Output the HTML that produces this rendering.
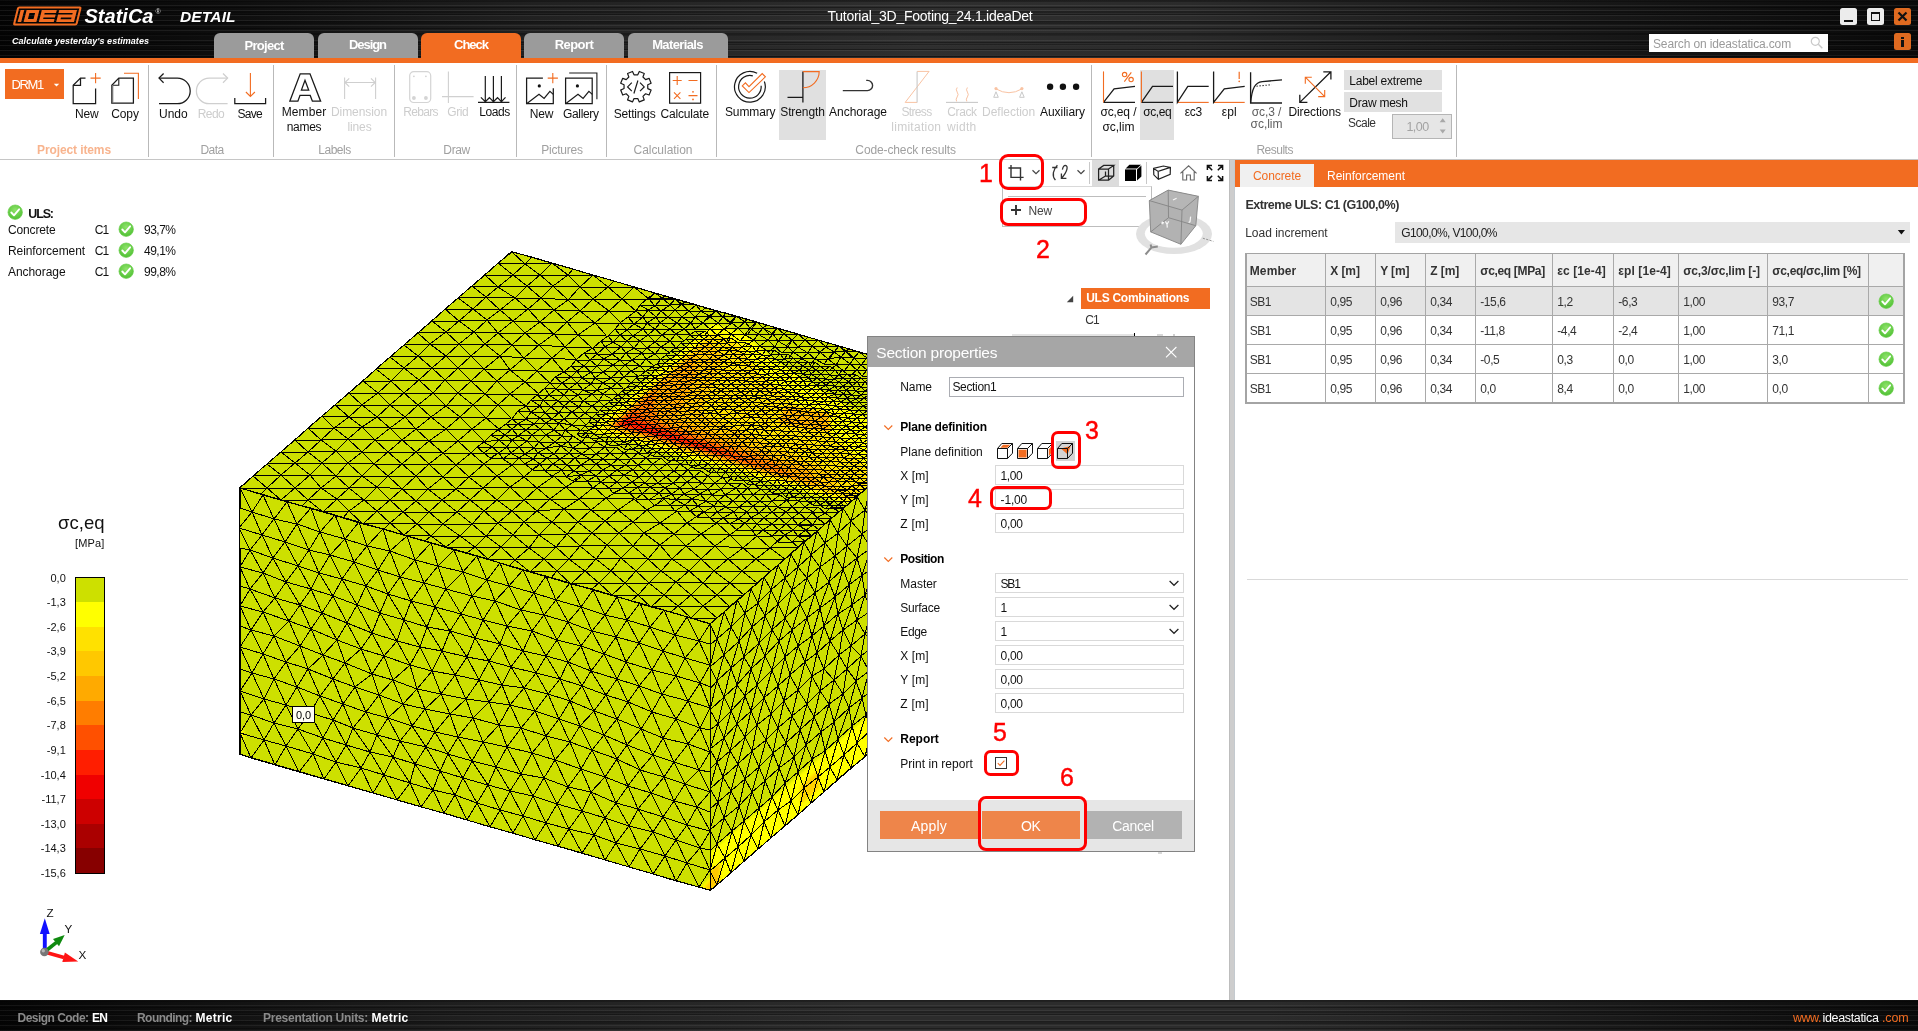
<!DOCTYPE html><html><head><meta charset="utf-8"><title>IDEA StatiCa Detail</title><style>html,body{margin:0;padding:0;background:#fff;}
body{width:1918px;height:1031px;position:relative;overflow:hidden;font-family:"Liberation Sans",sans-serif;}
.t{position:absolute;white-space:nowrap;line-height:1;will-change:opacity;}
.r{position:absolute;}
svg{overflow:visible;}</style></head><body><div class="r" style="left:0px;top:160px;width:1229px;height:840px;background:#fff;"></div><svg class="r" style="left:220px;top:240px" width="780" height="660" viewBox="220 240 780 660"><defs><filter id="bl" x="-10%" y="-10%" width="120%" height="120%"><feGaussianBlur stdDeviation="1.6"/></filter><clipPath id="ctop"><polygon points="239.5,487.8 511.5,251.5 982.5,387.4 710.5,623.7"/></clipPath><clipPath id="crt"><polygon points="710.5,623.7 982.5,387.4 982.5,654.2 710.5,890.5"/></clipPath><clipPath id="cfl"><polygon points="239.5,487.8 710.5,623.7 710.5,890.5 239.5,754.2"/></clipPath></defs><polygon points="239.5,487.8 511.5,251.5 982.5,387.4 982.5,654.2 710.5,890.5 239.5,754.2" fill="#cde000"/><g clip-path="url(#ctop)"><g filter="url(#bl)"><polygon points="589.8,429.9 712.2,323.6 744.2,332.8 771.6,358.0 864.5,416.3 915.0,462.4 862.0,508.4" fill="#ffff00"/><polygon points="601.4,428.5 711.5,332.8 738.0,343.6 760.0,373.6 817.6,421.7 879.1,477.2 851.9,500.8" fill="#ffe100"/><polygon points="606.4,427.5 707.6,339.5 723.0,356.6 701.6,413.4 838.0,474.8 835.3,493.5" fill="#ffc800"/><polygon points="609.9,426.6 693.1,354.3 696.6,374.2 676.6,418.8 811.2,470.8 818.1,486.6" fill="#ffaa00"/><polygon points="612.7,425.8 656.5,387.8 653.8,405.9 660.4,421.9 771.9,461.4 800.6,480.0" fill="#ff7d00"/><polygon points="615.2,425.3 633.4,409.4 648.2,421.6 724.2,448.2 764.0,468.2" fill="#ff5000"/><polygon points="617.4,425.0 626.6,416.9 653.9,427.6 703.5,444.5 736.6,459.3" fill="#ff1e00"/><polygon points="778.4,423.0 785.3,406.1 828.5,412.2 831.0,431.8" fill="#ffb400"/></g></g><g clip-path="url(#crt)"><g filter="url(#bl)"><polygon points="696.9,863.6 996.1,603.7 996.1,669.1 696.9,929.0" fill="#ffff00"/><polygon points="696.9,882.3 720.0,862.2 720.0,882.2 696.9,902.3" fill="#ffc800"/><polygon points="800.3,785.8 819.3,769.3 819.3,788.0 800.3,804.5" fill="#ffd200"/></g></g><g clip-path="url(#cfl)"><g filter="url(#bl)"><polygon points="695.4,891.5 715.2,871.9 715.2,897.2" fill="#ffff00"/><polygon points="703.4,888.5 715.2,874.5 715.2,891.9" fill="#ffc800"/><polygon points="215.9,722.1 244.2,730.3 244.2,739.6 215.9,731.4" fill="#ffff00"/></g></g><g fill="none" stroke="#000" stroke-width="1" shape-rendering="crispEdges"><path d="M240 488l13-12l14-12l14-12l14-12l13-12l14-12l13-11l14-12l14-12l13-12l14-12l14-12l14-12l14-12l13-12l13-11l14-12l13-11l13-12l14-11M261 494l6-6l14-13l14-12l13-11l13-12l13-12l15-11l13-12l16-12l13-12l13-13l14-12l12-12l16-12l13-11l14-12l13-12l12-10l15-12l12-11l7-7M281 500l14-12l15-13l12-12l14-12l12-12l14-12l15-10l13-12l14-12l15-13l13-12l14-12l13-12l15-12l13-12l13-10l15-12l12-12l13-11l12-12M302 506l6-6l13-12l15-12l12-13l14-11l13-12l15-12l15-11l13-12l15-12l12-13l13-12l13-12l14-12l13-11l15-12l15-12l13-11l12-12l15-11l5-6M323 512l14-13l12-11l13-12l12-12l14-12l14-12l14-11l15-12l15-11l12-13l13-12l13-12l16-13l12-11l13-12l15-11l14-12l14-10l12-13l13-12M343 518l6-7l15-11l13-13l11-11l14-12l14-12l13-11l17-12l14-12l13-12l12-11l12-13l13-11l14-12l15-13l15-11l13-12l13-11l13-12l15-12l6-6M363 524l14-13l13-11l12-11l14-13l13-12l14-11l15-12l14-12l14-11l12-13l12-11l15-12l12-11l15-13l13-11l13-12l17-12l14-12l13-12l12-12M384 529l6-6l13-11l13-11l12-12l15-12l13-12l15-12M649 299l6-6M404 535l13-11l12-12l13-12l14-11l13-12l15-13l14-11M663 311l12-12M425 541l6-5l12-12l14-12l13-12l13-12l14-12l15-11M689 311l7-6M446 547l14-11l12-12l12-13l13-11l13-13l14-10l14-12M703 323l13-12M467 553l8-6l11-11l12-13l14-12l12-11l13-12l17-12M730 323l6-7M488 559l13-12l12-12l11-13l13-11l13-12l16-12l15-10M747 335l10-13M509 566l6-6l14-12l10-13l13-13l12-13l15-10l15-12M770 335l7-7M530 572l14-13l12-12l11-13l11-12l13-12l15-12l17-10M786 346l12-12M551 578l6-7l12-12l11-13l12-13l13-12l13-11l16-11M812 346l6-6M571 584l14-13l11-12l11-14l12-12l14-11l14-12l18-11M829 359l10-13M592 589l7-6l12-12l10-13l12-12l11-13l16-10l17-12M853 358l6-6M612 595l13-12l11-12l12-12l12-14l14-11l13-11l16-11M869 370l11-12M631 601l7-6l11-12l12-12l11-12l14-13l15-12l16-11M895 370l5-6M651 607l13-12l12-13l13-11l12-12l14-13l15-11l14-11M909 382l12-12M671 612l7-6l13-11l12-12l11-12l14-12l15-11l14-12M935 382l6-6M691 618l12-12l14-11l13-12l12-12l14-12l14-11l14-13M950 394l12-13M710 624l7-6l13-11l14-12l13-12l14-12l14-12l13-12l14-11l13-12l14-12l13-11l13-12l13-11l14-12l14-12l13-12l14-12l15-12l14-12l14-13l6-6M240 488l21 6l20 6l21 6l21 6l20 6l20 6l21 5l20 6l21 6l21 6l21 6l21 6l21 7l21 6l21 6l20 6l21 5l20 6l19 6l20 6l20 5l20 6l19 6M240 488l21 6l20 6l21 6l21 6l20 6l20 6l21 5l20 6l21 6l21 6l21 6l21 6l21 7l21 6l21 6l20 6l21 5l20 6l19 6l20 6l20 5l20 6l19 6M240 488l21 6l20 6l21 6l21 6l20 6l20 6l21 5l20 6l21 6l21 6l21 6l21 6l21 7l21 6l21 6l20 6l21 5l20 6l19 6l20 6l20 5l20 6l19 6M240 488l21 6l20 6l21 6l21 6l20 6l20 6l21 5l20 6l21 6l21 6l21 6l21 6l21 7l21 6l21 6l20 6l21 5l20 6l19 6l20 6l20 5l20 6l19 6M240 488l21 6l20 6l21 6l21 6l20 6l20 6l21 5l20 6l21 6l21 6l21 6l21 6l21 7l21 6l21 6l20 6l21 5l20 6l19 6l20 6l20 5l20 6l19 6M240 488l21 6l20 6l21 6l21 6l20 6l20 6l21 5l20 6l21 6l21 6l21 6l21 6l21 7l21 6l21 6l20 6l21 5l20 6l19 6l20 6l20 5l20 6l19 6M240 488l21 6l20 6l21 6l21 6l20 6l20 6l21 5l20 6l21 6l21 6l21 6l21 6l21 7l21 6l21 6l20 6l21 5l20 6l19 6l20 6l20 5l20 6l19 6M240 488l21 6l20 6l21 6l21 6l20 6l20 6l21 5l20 6l21 6l21 6l21 6l21 6l21 7l21 6l21 6l20 6l21 5l20 6l19 6l20 6l20 5l20 6l19 6M240 488l21 6l20 6l21 6l21 6l20 6l20 6l21 5l20 6l21 6l21 6l21 6l21 6l21 7l21 6l21 6l20 6l21 5l20 6l19 6l20 6l20 5l20 6l19 6M240 488l21 6l20 6l21 6l21 6l20 6l20 6l21 5l20 6l21 6l21 6l21 6l21 6l21 7l21 6l21 6l20 6l21 5l20 6l19 6l20 6l20 5l20 6l19 6M240 488l21 6l20 6l21 6l21 6l20 6l20 6l21 5l20 6l21 6l21 6l21 6l21 6l21 7l21 6l21 6l20 6l21 5l20 6l19 6l20 6l20 5l20 6l19 6M240 488l21 6l20 6l21 6l21 6l20 6l20 6l21 5l20 6l21 6l21 6l21 6l21 6l21 7l21 6l21 6l20 6l21 5l20 6l19 6l20 6l20 5l20 6l19 6M240 488l21 6l20 6l21 6l21 6l20 6l20 6l21 5l20 6l21 6l21 6l21 6l21 6l21 7l21 6l21 6l20 6l21 5l20 6l19 6l20 6l20 5l20 6l26 0M240 488l21 6l20 6l21 6l21 6l20 6l20 6l21 5l20 6l21 6l21 6l21 6l21 6l21 7l21 6l21 6l20 6l21 5l20 6l19 6l20 6l27-1l25 0l27 1M240 488l21 6l20 6l21 6l21 6l20 6l20 6l21 5l20 6l21 6l21 6l21 6l21 6l21 7l21 6l21 6l20 6l21 5l20 6l26 0l26 0l27 0l26 0l27 0M240 488l21 6l20 6l21 6l21 6l20 6l20 6l21 5l20 6l21 6l21 6l21 6l21 6l21 7l21 6l21 6l20 6l28-1l26 0l24 0l27-1l27 1l27 0l27 0M240 488l21 6l20 6l21 6l21 6l20 6l20 6l21 5l20 6l21 6l21 6l21 6l21 6l21 7l21 6l27-1l28 0l26 0l25 0l25 0l28 0l25 0l28 0l29 0M240 488l21 6l20 6l21 6l21 6l20 6l20 6l21 5l20 6l21 6l21 6l21 6l21 6l27 1l29-1l25 0l27 0l25-1l27 1l24 0l29 0l27 0l28 0l29 0M240 488l21 6l20 6l21 6l21 6l20 6l20 6l21 5l20 6l21 6l21 6l29 0l26 0l28 1l27-1l24-1l27-1l26 1l27-1l26 1l29 0l28 2l27 0l28-1M240 488l21 6l20 6l21 6l21 6l20 6l20 6l21 5l20 6l27 1l29 0l26 0l27-1l26 0l28-1l25-1l27 0l25 0l30 1l27 0l29 1l27 1M784 535l28 1M240 488l21 6l20 6l21 6l21 6l20 6l20 6l27-1l27 1l26 0l29 0l26-1l26-1l28 0l26 0l27-1l28 1l27 1l27 0l30 0M798 524l27 0M240 488l21 6l20 6l21 6l21 6l26-1l28 0l26 1l26 0l28 0l27-1l28 0l25 0l27-2l27 1l27 0l29 0l30 1M812 513l27-1M240 488l21 6l20 6l27 0l29-1l27 1l26 0l26 1l26-1l28 0l27 0l27 0l26-1l29 0l27-1l28 1M826 501l26 0M240 488l27 0l28 0l26 0l28 0l28-1l25 2l26 0l28 0l27-1l27-1l27 1l29-1l28 0M837 489l28 0M253 476l28-1l29 0l26 1l26 0l26 0l28 0l27 1l26 0l28-1l27 1l30-1M850 478l28 0M267 464l28-1l27 0l26 0l26 1l28 0l27 0l27 1l28-1l28 1M864 466l28 0M281 452l27 0l28-1l26 1l26 0l28 0l27 1l28 0M876 454l30 0M295 440l26 0l27-1l27 1l27 0l27 1l29 0l26 0M892 442l27 0M308 428l26 0l28-1l28 1l26 1l30 0l26 0l27 0M906 430l27 0M322 416l27 1l28 0l28 0l26 0l29 0l26 1l25 0M920 418l28 0M335 405l27 0l28 0l28 0l28 1l27-1l25 0l28 1M934 407l28-1M349 393l29 0l26 0l29 0l25 0l27 1l25 0l29 0M950 394l26-1M363 381l28 0l28-1l26 0l26 1l26 0l28 1l25 1M935 382l27-1l20 6M376 369l28-1l28 0l26 0l26 1l26 1l27 1l27 1M895 370l26 0l20 6l21 5l20 6M390 357l28-1l28 0l25 0l29 0l24 2l28 0l25 2M853 358l27 0l20 6l21 6l20 6l21 5l20 6M404 345l26-1l29 0l26 0l27 1l27 0l26 2l27 1M812 346l27 0l20 6l21 6l20 6l21 6l20 6l21 5l20 6M418 333l28-1l28 0l24 1l27 0l29 1l24 1l28 0M770 335l28-1l20 6l21 6l20 6l21 6l20 6l21 6l20 6l21 5l20 6M432 321l27 0l28-1l26 1l27 1l27 0l28 1l26 0M730 323l27-1l20 6l21 6l20 6l21 6l20 6l21 6l20 6l21 6l20 6l21 5l20 6M445 309l28 0l27 1l28-1l26 1l26 1l29 0l27 0M689 311l27 0l20 5l21 6l20 6l21 6l20 6l21 6l20 6l21 6l20 6l21 6l20 6l21 5l20 6M458 298l28-1l29 1l26 0l27 2l25-1l29 0l27 0l26 0l21 6l20 6l20 5l21 6l20 6l21 6l20 6l21 6l20 6l21 6l20 6l21 6l20 6l21 5l20 6M472 286l26 1l29-1l26 0l27 1l28 0l26 0l21 6l20 6l21 6l20 6l20 5l21 6l20 6l21 6l20 6l21 6l20 6l21 6l20 6l21 6l20 6l21 5l20 6M485 275l28 0l27 0l28 0l25 0l21 6l20 6l21 6l20 6l21 6l20 6l20 5l21 6l20 6l21 6l20 6l21 6l20 6l21 6l20 6l21 6l20 6l21 5l20 6M498 263l27 1l27-1l21 6l20 6l21 6l20 6l21 6l20 6l21 6l20 6l20 5l21 6l20 6l21 6l20 6l21 6l20 6l21 6l20 6l21 6l20 6l21 5l20 6M512 252l20 5l20 6l21 6l20 6l21 6l20 6l21 6l20 6l21 6l20 6l20 5l21 6l20 6l21 6l20 6l21 6l20 6l21 6l20 6l21 6l20 6l21 5l20 6M512 252l20 5l20 6l21 6l20 6l21 6l20 6l21 6l20 6l21 6l20 6l20 5l21 6l20 6l21 6l20 6l21 6l20 6l21 6l20 6l21 6l20 6l21 5l20 6M240 488l21 6l20 6l21 6l21 6l20 6l20 6l21 5l20 6l21 6l21 6l21 6l21 6l21 7l21 6l21 6l20 6l21 5l20 6l19 6l20 6l20 5l20 6l19 6M240 488l21 6l20 6l21 6l21 6l20 6l20 6l21 5l20 6l21 6l21 6l21 6l21 6l21 7l21 6l21 6l20 6l21 5l20 6l19 6l20 6l20 5l20 6l19 6M253 476l14 12l14 12l21 6l21 6l20 6l20 6l21 5l20 6l21 6l21 6l21 6l21 6l21 7l21 6l21 6l20 6l21 5l20 6l19 6l20 6l20 5l20 6l19 6M267 464l14 11l14 13l13 12l15 12l20 6l20 6l21 5l20 6l21 6l21 6l21 6l21 6l21 7l21 6l21 6l20 6l21 5l20 6l19 6l20 6l20 5l20 6l19 6M281 452l14 11l15 12l11 13l16 11l12 12l14 13l21 5l20 6l21 6l21 6l21 6l21 6l21 7l21 6l21 6l20 6l21 5l20 6l19 6l20 6l20 5l20 6l19 6M295 440l13 12l14 11l14 13l13 12l15 12l13 11l13 12l14 12l21 6l21 6l21 6l21 6l21 7l21 6l21 6l20 6l21 5l20 6l19 6l20 6l20 5l20 6l19 6M308 428l13 12l15 11l12 12l14 13l15 11l13 13l13 12l14 12l14 12l15 11l21 6l21 6l21 7l21 6l21 6l20 6l21 5l20 6l19 6l20 6l20 5l20 6l19 6M322 416l12 12l14 11l14 13l12 12l14 12l14 13l14 12l13 11l14 12l17 12l15 11l13 12l21 7l21 6l21 6l20 6l21 5l20 6l19 6l20 6l20 5l20 6l19 6M335 405l14 12l13 10l13 13l13 12l14 12l14 12l12 13l14 11l15 12l15 12l14 12l15 11l14 13l15 12l21 6l20 6l21 5l20 6l19 6l20 6l20 5l20 6l19 6M349 393l13 12l15 12l13 11l12 12l14 12l13 12l14 13l13 12l14 11l14 11l14 12l15 12l16 13l15 11l13 12l14 13l21 5l20 6l19 6l20 6l20 5l20 6l19 6M363 381l15 12l12 12l15 12l11 12l13 12l14 12l13 12l13 12l14 11l14 12l15 11l12 11l15 13l17 12l13 12l16 12l14 12l13 12l19 6l20 6l20 5l20 6l19 6M376 369l15 12l13 12l14 12l13 12l15 12l12 12l13 12l13 11l13 12l13 11l14 13l13 11l15 11l15 12l13 12l16 13l15 12l14 12l13 12l13 12l20 5l20 6l19 6M390 357l14 11l15 12l14 13l13 13l14 11l12 12l12 12M512 465l12 12l13 11l13 11l14 10l14 13l14 11l15 12l14 13l15 13l13 12l15 12l14 11l13 12l19 6M404 345l14 11l14 12l13 12l13 13l15 12l13 13l13 11M554 476l12 11l13 12l12 11l14 11l14 12l14 13l15 13l13 12l15 11l15 13l12 11l14 12M418 333l12 11l16 12l12 12l13 13l14 13l13 11l13 13M594 487l12 11l12 12l15 12l11 11l16 12l12 14l17 12l14 12l14 12l13 12M432 321l14 11l13 12l12 12l13 13l13 12l13 13l16 12M634 499l13 11l13 13l14 11l12 12l15 13l13 12l16 12l14 12M445 309l14 12l15 11l11 12l15 12l10 14l15 12l14 12M677 511l10 12l14 11l14 12l13 13l14 12l15 12M458 298l15 11l14 11l11 13l14 12l12 13l13 13l13 12M717 523l13 12l13 13l13 11l15 12M472 286l14 11l14 13l13 11l12 12l14 12l13 13l12 14M757 536l13 12l15 11M485 275l13 12l17 11l13 11l12 13l14 12l11 13l12 13M784 535l14 12M498 263l15 12l14 11l14 12l13 12l13 12l11 13l14 13M798 524l14 12M512 252l13 12l15 11l13 11l15 14l12 11l15 12l11 12M812 513l13 11M512 252l20 5l20 6l16 12l12 12l13 12l16 12l12 12M826 501l13 11M512 252l20 5l20 6l21 6l20 6l15 12l14 12l14 12M837 489l15 12M512 252l20 5l20 6l21 6l20 6l21 6l20 6l15 12M850 478l15 11M512 252l20 5l20 6l21 6l20 6l21 6l20 6l21 6l20 6l14 12M864 466l14 12M512 252l20 5l20 6l21 6l20 6l21 6l20 6l21 6l20 6l21 6l20 6l14 12M876 454l16 12M512 252l20 5l20 6l21 6l20 6l21 6l20 6l21 6l20 6l21 6l20 6l20 5l21 6l13 13M892 442l14 12M512 252l20 5l20 6l21 6l20 6l21 6l20 6l21 6l20 6l21 6l20 6l20 5l21 6l20 6l21 6l14 12M906 430l13 12M512 252l20 5l20 6l21 6l20 6l21 6l20 6l21 6l20 6l21 6l20 6l20 5l21 6l20 6l21 6l20 6l21 6l14 12M920 418l13 12M512 252l20 5l20 6l21 6l20 6l21 6l20 6l21 6l20 6l21 6l20 6l20 5l21 6l20 6l21 6l20 6l21 6l20 6l21 6l15 12M934 407l14 11M512 252l20 5l20 6l21 6l20 6l21 6l20 6l21 6l20 6l21 6l20 6l20 5l21 6l20 6l21 6l20 6l21 6l20 6l21 6l20 6l21 6l14 12M950 394l12 12M512 252l20 5l20 6l21 6l20 6l21 6l20 6l21 6l20 6l21 6l20 6l20 5l21 6l20 6l21 6l20 6l21 6l20 6l21 6l20 6l21 6l20 6l21 5l14 12M512 252l20 5l20 6l21 6l20 6l21 6l20 6l21 6l20 6l21 6l20 6l20 5l21 6l20 6l21 6l20 6l21 6l20 6l21 6l20 6l21 6l20 6l21 5l20 6M512 252l20 5l20 6l21 6l20 6l21 6l20 6l21 6l20 6l21 6l20 6l20 5l21 6l20 6l21 6l20 6l21 6l20 6l21 6l20 6l21 6l20 6l21 5l20 6M512 252l20 5l20 6l21 6l20 6l21 6l20 6l21 6l20 6l21 6l20 6l20 5l21 6l20 6l21 6l20 6l21 6l20 6l21 6l20 6l21 6l20 6l21 5l20 6M512 252l20 5l20 6l21 6l20 6l21 6l20 6l21 6l20 6l21 6l20 6l20 5l21 6l20 6l21 6l20 6l21 6l20 6l21 6l20 6l21 6l20 6l21 5l20 6M512 252l20 5l20 6l21 6l20 6l21 6l20 6l21 6l20 6l21 6l20 6l20 5l21 6l20 6l21 6l20 6l21 6l20 6l21 6l20 6l21 6l20 6l21 5l20 6M512 252l20 5l20 6l21 6l20 6l21 6l20 6l21 6l20 6l21 6l20 6l20 5l21 6l20 6l21 6l20 6l21 6l20 6l21 6l20 6l21 6l20 6l21 5l20 6M512 252l20 5l20 6l21 6l20 6l21 6l20 6l21 6l20 6l21 6l20 6l20 5l21 6l20 6l21 6l20 6l21 6l20 6l21 6l20 6l21 6l20 6l21 5l20 6M512 252l20 5l20 6l21 6l20 6l21 6l20 6l21 6l20 6l21 6l20 6l20 5l21 6l20 6l21 6l20 6l21 6l20 6l21 6l20 6l21 6l20 6l21 5l20 6M512 252l20 5l20 6l21 6l20 6l21 6l20 6l21 6l20 6l21 6l20 6l20 5l21 6l20 6l21 6l20 6l21 6l20 6l21 6l20 6l21 6l20 6l21 5l20 6M512 252l20 5l20 6l21 6l20 6l21 6l20 6l21 6l20 6l21 6l20 6l20 5l21 6l20 6l21 6l20 6l21 6l20 6l21 6l20 6l21 6l20 6l21 5l20 6M512 252l20 5l20 6l21 6l20 6l21 6l20 6l21 6l20 6l21 6l20 6l20 5l21 6l20 6l21 6l20 6l21 6l20 6l21 6l20 6l21 6l20 6l21 5l20 6M512 252l20 5l20 6l21 6l20 6l21 6l20 6l21 6l20 6l21 6l20 6l20 5l21 6l20 6l21 6l20 6l21 6l20 6l21 6l20 6l21 6l20 6l21 5l20 6M512 252l20 5l20 6l21 6l20 6l21 6l20 6l21 6l20 6l21 6l20 6l20 5l21 6l20 6l21 6l20 6l21 6l20 6l21 6l20 6l21 6l20 6l21 5l20 6M471 453l6-6l7-5l7-7l7-5l8-6l6-5l6-8l8-5l5-6l6-5l8-7l5-5l5-6l9-5l7-6l5-6l8-7l9-5l8-7l7-5l7-7l5-6l8-6l8-6l4-6l8-7l7-5M484 453l8-6l7-7l6-5l7-6l6-5l8-5l5-7l9-6l3-6l6-5l7-6l6-6l9-6l6-6l7-5l6-6l7-6l8-7l8-5l7-7l7-5l7-6l9-7l5-7l7-4l7-8l3-2M490 458l9-5l8-6l5-7l6-4l8-6l8-6l6-6l5-5l6-6l7-6l6-6l5-6l8-6l5-5l9-6l6-6l7-7l8-5l9-7l6-6l6-5l10-7l4-6l9-6l5-6l9-6l5-6M503 459l8-6l8-6l8-6l5-6l8-6l6-6l6-4l7-6l5-7l6-5l8-6l5-5l8-6l4-6l8-6l10-7l7-5l6-7l8-5l6-7l8-6l7-6l5-6l8-6l7-7l7-6l3-2M512 465l7-7l6-4l9-6l5-6l7-7l8-5l5-7l5-4l8-7l7-5l4-6l9-7l5-4l6-7l8-5l8-7l6-6l7-5l10-7l5-5l8-6l7-7l8-6l7-6l5-6l7-6l7-6M525 464l8-5l5-6l8-5l9-6l7-6l3-6l7-5l7-7l6-5l7-7l7-5l4-7l8-6l6-5l7-6l7-6l9-5l6-7l9-5l6-7l9-6l6-7l8-5l7-6l4-6l6-6l5-3M533 470l7-6l7-6l7-4l7-8l7-4l5-6M695 329l8-6l6-7l7-5M545 471l8-7l7-5l9-6l4-5l9-6l5-7M704 336l6-7l8-6l5-6l3-4M552 476l10-6l5-5l8-7l7-4l8-6l6-6M717 335l7-6l8-6l4-7M566 477l8-6l7-6l9-6l6-5l9-7l3-6M727 341l4-7l7-6l7-6l2-3M573 481l8-6l8-4l7-7l7-5l7-6l6-6M740 341l5-6l5-7l7-6M587 481l9-5l7-6l8-5l7-6l6-6l7-5M746 346l8-6l4-6l5-6l4-3M593 488l8-6l8-6l8-6l9-5l5-6l7-6M760 346l8-6l5-6l4-6M609 488l8-6l7-7l9-5l5-5l8-7l7-6M768 352l7-5l3-6l6-7l3-3M613 493l10-5l9-6l7-5l7-6l7-7l8-6M782 353l6-6l4-7l6-6M629 493l9-6l7-4l7-7l7-6l8-6l8-6M789 358l4-6l5-5l7-7l3-3M636 499l6-5l8-7l8-4l8-6l8-6l6-7M802 358l6-5l4-7l6-6M649 500l10-7l6-5l8-5l8-7l7-6l7-6M810 365l5-6l5-7l6-5l2-4M655 506l8-8l9-4l8-6l7-6l7-5l7-6M824 364l4-5l6-7l5-6M670 505l6-5l8-6l10-5l8-6l6-7l6-6M830 370l6-5l5-8l5-6l3-2M675 511l10-6l7-6l8-5l8-5l7-6l8-6M844 371l6-7l4-6l5-6M690 511l8-5l8-5l6-6l9-6l6-6l5-6M850 376l7-6l4-5l6-7l2-3M697 517l7-5l10-6l4-5l7-6l11-7l6-5M862 376l5-6l7-7l6-5M710 518l7-6l9-5l7-6l8-7l7-6l5-5M870 383l6-6l5-7l6-7l3-2M716 523l7-5l11-6l5-5l8-6l6-6l8-6M883 383l4-7l8-6l5-6M730 524l8-5l9-7l6-6l7-5l6-7l7-6M888 389l8-7l6-6l5-6l3-3M737 530l8-7l6-5l8-5l8-7l5-5l8-6M901 389l7-8l6-5l7-6M752 530l5-6l7-6l8-6l6-5l9-7l6-4M908 395l9-7l5-7l6-5l3-3M756 536l7-6l9-6l7-6l7-6l6-5l7-6M922 393l7-5l5-6l7-6M772 536l7-6l7-6l6-6l7-5l6-6l8-6M928 400l7-6l7-7l8-5l2-3M778 542l7-7l8-5l5-5l8-6l7-7l5-5M942 400l7-6l7-7l6-6M792 542l6-6l8-6l7-5l4-7l8-5l6-6M948 406l6-6l8-6l8-7l2-3M798 547l7-6l7-5l7-6l6-6l7-6l7-6l6-5l7-6l7-6l6-6l7-5l6-6l7-6l7-6l7-6l7-6l6-6l7-6l7-6l7-6l8-6l7-6l7-6l7-6l7-7l7-6l6-6M778 542l14 0l13-1M756 536l16 0l13-1l13 1l14 0M737 530l15 0l11 0l16 0l14 0l13 0l13 0M716 523l14 1l15-1l12 1l15 0l14 0l12 1l15 0l12-1M697 517l13 1l13 0l15 1l13-1l13 0l15 0l13 0l14 1l11-1l15 0M675 511l15 0l14 1l13 0l17 0l13 0l12 1l13-1l14 0l13 1l14-1l12 1l14-1M655 506l15-1l15 0l13 1l16 0l12 1l13 0l14-1l14 0l11 1l14 0l13 0l13 0M831 507l14 0M636 499l13 1l14-2l13 2l16-1l14 2l12 0l15 0l14 0l13 0l12 0l15-1l12 1M839 501l13 0M613 493l16 0l13 1l17-1l13 1l12 0l16 0l12 1l13 0l16-1l12 1l13-1l14 1M844 495l15 0M593 488l16 0l14 0l15-1l12 0l15 1l15 0l14 1l14 0l13 0l15-1l12 0l13 1M852 490l13-1M573 481l14 0l14 1l16 0l15 0l13 1l13 0l15 0l14-1l15 1l13 0l12 0l15 0M859 483l13 1M552 476l14 1l15-2l15 1l13 0l15-1l15 2l13-1l14 1l15-1l13 1l14-1l15 1M865 478l13 0M533 470l12 1l17-1l12 1l15 0l14-1l14 0l16 0l13 1l13-1l15 1l14-1l13 1M872 473l13-1M512 465l13-1l15 0l13 0l14 1l14 0l15-1l15 1l15 0l12 0l15-1l14 0l13 0M878 467l14-1M490 458l13 1l16-1l14 1l14-1l13 1l15-1l15 1l13 0l15 0l13 0l15-1l15 0M886 460l13 0M471 453l13 0l15 0l12 0l14 1l13-1l16 1l15-1l13 1l14 0l14-1l14 0l14 0M891 454l15 0M477 447l15 0l15 0l12 0l15 1l12 0l15-2l12 2l17 0l15-1l11 0M898 448l14 0M484 442l15-2l13 0l15 1l12 1l16 0l13 0l14 0l14 0M906 442l13 0M491 435l14 0l13 1l14-1l14 0l16 1l11 0M913 436l13 0M498 430l14-1l14 1l14-1l14 1l11 0l15 0M919 430l14 0M506 424l12 0l16 0l12-1l13 0l13 2l14 0M926 424l15 0M512 419l14 0l14-1l12 1l12 0l15-1l13 0M934 418l14 0M518 411l13 1l14 1l14 0l13-1l13 1l14-1M943 412l12 0M526 406l14 0l11 1l13-1l15 1l13-1l13 1M948 406l14 0M531 400l12 0l15 1l12 0l13 0l16 0l14-1M942 400l12 0l15-1M537 395l12 0l15 0l14 0l14-1l11 0l15 1M922 393l13 1l14 0l13 0l14-1M545 388l11 1l13 0l14 1l14 0l14-2l12 0M901 389l16-1l12 0l13-1l14 0l14 0l12 0M550 383l12 0l15 0l14 1l12-1l14 0l15 1M883 383l13-1l12-1l14 0l12 1l16 0l12-1l10 3l10 3M555 377l16 0l11 1l13 0l16 0l13-1l14-1M862 376l14 1l11-1l15 0l12 0l14 0l13 0l11 3l10 2l10 3l10 3M564 372l13-1l14 1l12 0l16-1l12 0l14 0M844 371l13-1l10 0l14 0l14 0l12 0l14 0l10 3l10 3l11 3l10 2l10 3l10 3M571 366l13 0l13 0l16-1l12 0l15 1l14 0M824 364l12 1l14-1l11 1l13-2l13 0l13 1l10 3l11 3l10 3l10 3l11 3l10 2l10 3l10 3M576 360l14 0l14-1l16 1l12 0l14-1l14 0M802 358l13 1l13 0l13-2l13 1l13 0l13 0l10 3l10 3l10 3l11 3l10 3l10 3l11 3l10 2l10 3l10 3M584 353l13 1l15 0l14-1l16 0l13 1l15-1M782 353l11-1l15 1l12-1l14 0l12-1l13 1l10 3l11 3l10 3l10 3l10 3l11 3l10 3l10 3l11 3l10 2l10 3l10 3M593 348l12-1l16 0l13 1l13 0l14-1l15 1M760 346l15 1l13 0l10 0l14-1l14 1l13-1l10 3l10 3l10 3l11 3l10 3l10 3l10 3l11 3l10 3l10 3l11 3l10 2l10 3l10 3M601 341l12 1l14-1l13 0l15 1l15-1l14 0M740 341l14-1l14 0l10 1l14-1l13 0l13 0l10 3l11 3l10 3l10 3l10 3l11 3l10 3l10 3l10 3l11 3l10 3l10 3l11 3l10 2l10 3l10 3M608 336l12-1l13 1l15-1l14 0l14-1l15 1M717 335l14-1l14 1l13-1l15 0l11 0l14 0l10 3l10 3l10 3l11 3l10 3l10 3l10 3l11 3l10 3l10 3l10 3l11 3l10 3l10 3l11 3l10 2l10 3l10 3M615 329l12 1l16-1l12 0l15 0l14 0l11 0l15 0l14 0l14-1l12 0l13 0l14 0l10 3l11 3l10 3l10 3l10 3l11 3l10 3l10 3l10 3l11 3l10 3l10 3l10 3l11 3l10 3l10 3l11 3l10 2l10 3l10 3M620 323l14 1l13-1l13 0l17 0l14 0l12 0l15 0l14 0l13-1l12 0l10 3l10 3l10 3l11 3l10 3l10 3l10 3l11 3l10 3l10 3l10 3l11 3l10 3l10 3l10 3l11 3l10 3l10 3l11 3l10 2l10 3l10 3M628 317l15 0l13 0l12 0l14 0l13 0l14-1l14 1l13-1l11 3l10 3l10 3l10 3l10 3l11 3l10 3l10 3l10 3l11 3l10 3l10 3l10 3l11 3l10 3l10 3l10 3l11 3l10 3l10 3l11 3l10 2l10 3l10 3M636 311l12-1l13 1l14-1l14 1l12 0l15 0l10 2l10 3l11 3l10 3l10 3l10 3l10 3l11 3l10 3l10 3l10 3l11 3l10 3l10 3l10 3l11 3l10 3l10 3l10 3l11 3l10 3l10 3l11 3l10 2l10 3l10 3M640 305l15 1l15-1l12-1l14 1l10 3l10 3l10 2l10 3l11 3l10 3l10 3l10 3l10 3l11 3l10 3l10 3l10 3l11 3l10 3l10 3l10 3l11 3l10 3l10 3l10 3l11 3l10 3l10 3l11 3l10 2l10 3l10 3M648 298l14 0l13 1l10 3l11 3l10 3l10 3l10 2l10 3l11 3l10 3l10 3l10 3l10 3l11 3l10 3l10 3l10 3l11 3l10 3l10 3l10 3l11 3l10 3l10 3l10 3l11 3l10 3l10 3l11 3l10 2l10 3l10 3M655 293l10 3l10 3l10 3l11 3l10 3l10 3l10 2l10 3l11 3l10 3l10 3l10 3l10 3l11 3l10 3l10 3l10 3l11 3l10 3l10 3l10 3l11 3l10 3l10 3l10 3l11 3l10 3l10 3l11 3l10 2l10 3l10 3M655 293l10 3l10 3l10 3l11 3l10 3l10 3l10 2l10 3l11 3l10 3l10 3l10 3l10 3l11 3l10 3l10 3l10 3l11 3l10 3l10 3l10 3l11 3l10 3l10 3l10 3l11 3l10 3l10 3l11 3l10 2l10 3l10 3M655 293l10 3l10 3l10 3l11 3l10 3l10 3l10 2l10 3l11 3l10 3l10 3l10 3l10 3l11 3l10 3l10 3l10 3l11 3l10 3l10 3l10 3l11 3l10 3l10 3l10 3l11 3l10 3l10 3l11 3l10 2l10 3l10 3M655 293l10 3l10 3l10 3l11 3l10 3l10 3l10 2l10 3l11 3l10 3l10 3l10 3l10 3l11 3l10 3l10 3l10 3l11 3l10 3l10 3l10 3l11 3l10 3l10 3l10 3l11 3l10 3l10 3l11 3l10 2l10 3l10 3M655 293l10 3l10 3l10 3l11 3l10 3l10 3l10 2l10 3l11 3l10 3l10 3l10 3l10 3l11 3l10 3l10 3l10 3l11 3l10 3l10 3l10 3l11 3l10 3l10 3l10 3l11 3l10 3l10 3l11 3l10 2l10 3l10 3M655 293l10 3l10 3l10 3l11 3l10 3l10 3l10 2l10 3l11 3l10 3l10 3l10 3l10 3l11 3l10 3l10 3l10 3l11 3l10 3l10 3l10 3l11 3l10 3l10 3l10 3l11 3l10 3l10 3l11 3l10 2l10 3l10 3M655 293l10 3l10 3l10 3l11 3l10 3l10 3l10 2l10 3l11 3l10 3l10 3l10 3l10 3l11 3l10 3l10 3l10 3l11 3l10 3l10 3l10 3l11 3l10 3l10 3l10 3l11 3l10 3l10 3l11 3l10 2l10 3l10 3M655 293l10 3l10 3l10 3l11 3l10 3l10 3l10 2l10 3l11 3l10 3l10 3l10 3l10 3l11 3l10 3l10 3l10 3l11 3l10 3l10 3l10 3l11 3l10 3l10 3l10 3l11 3l10 3l10 3l11 3l10 2l10 3l10 3M655 293l10 3l10 3l10 3l11 3l10 3l10 3l10 2l10 3l11 3l10 3l10 3l10 3l10 3l11 3l10 3l10 3l10 3l11 3l10 3l10 3l10 3l11 3l10 3l10 3l10 3l11 3l10 3l10 3l11 3l10 2l10 3l10 3M477 447l7 6l6 5M484 442l8 5l7 6l4 6l9 6M491 435l8 5l8 7l4 6l8 5l6 6l8 6M498 430l7 5l7 5l7 7l6 7l8 5l7 5l5 7l7 5M506 424l6 5l6 7l9 5l7 7l4 5l9 5l6 6l9 6l4 7l7 4M512 419l6 5l8 6l6 5l7 7l7 6l8 6l6 5l7 6l7 6l7 4l6 6l6 7M518 411l8 8l8 5l6 5l6 6l9 7l6 4l8 7l6 5l6 7l8 6l7 5l5 6l8 6l4 5M526 406l5 6l9 6l6 5l8 7l8 6l6 6l5 6l9 6l8 5l6 5l7 6l6 6l8 6l6 6l6 5l7 6M531 400l9 6l5 7l7 6l7 4l6 7l8 6l9 6l8 6l6 6l7 5l8 6l6 5l7 5l8 7l6 5l4 7l7 6l6 6M537 395l6 5l8 7l8 6l5 6l8 6l8 5M596 442l9 5l5 6l8 6l8 6l7 5l6 7l6 6l5 4l9 6l4 5l7 7l5 6M545 388l4 7l9 6l6 5l8 6l7 6l7 7M616 447l8 6l7 6l7 6l8 6l6 5l6 7l7 5l7 6l4 6l9 5l5 6l7 6M550 383l6 6l8 6l6 6l9 6l6 6l7 5M638 453l8 5l7 6l6 6l7 7l7 6l7 5l4 6l8 5l6 7l6 6l6 6l6 5M555 377l7 6l7 6l9 6l5 6l9 5l7 6M661 458l6 6l7 7l7 5l6 6l7 7l6 5l6 7l8 5l3 6l6 6l7 6l7 6M564 372l7 5l6 6l6 7l9 4l7 7l6 6M680 464l8 6l6 7l8 6l6 6l4 6l6 6l8 6l8 5l4 7l7 4l7 7l4 6M571 366l6 5l5 7l9 6l6 6l6 4l10 6M701 471l7 5l7 7l6 6l4 6l8 6l6 6l8 5l4 6l6 6l6 6l9 6l6 6M576 360l8 6l7 6l4 6l8 5l8 5l7 7M723 477l4 6l9 5l5 6l6 7l6 5l6 7l5 5l8 6l7 6l6 5l7 7l6 5M584 353l6 7l7 6l6 6l8 6l6 5l6 5M742 483l6 5l5 7l7 6l7 5l5 6l7 6l7 6l7 6l5 6l7 5M593 348l4 6l7 5l9 6l6 6l5 6l8 7M761 489l5 5l6 7l6 6l8 5l6 6l6 7l8 5l6 6M601 341l4 6l7 7l8 6l5 5l6 6l7 5M780 495l7 5l5 7l7 6l7 6l7 6l6 5M608 336l5 6l8 5l5 6l6 7l8 6l5 5M799 501l6 6l8 5l4 6l8 6M615 329l5 6l7 6l7 7l8 5l4 6l8 7M818 507l7 6l7 5M620 323l7 7l6 6l7 5l7 7l8 6l5 5M831 507l8 5M628 317l6 7l9 5l5 6l7 7l6 5l9 6M839 501l6 6M636 311l7 6l4 6l8 6l7 6l8 6l6 7M844 495l8 6M640 305l8 5l8 7l4 6l10 6l6 5l8 7M852 490l7 5M648 298l7 8l6 5l7 6l9 6l7 6l7 6M859 483l6 6M655 293l7 5l8 7l5 5l7 7l9 6l4 6M865 478l7 6M655 293l10 3l10 3l7 5l7 7l6 6l8 6l7 6l7 6M872 473l6 5M655 293l10 3l10 3l10 3l11 3l5 6l8 5l9 7l6 6l7 5l9 7M878 467l7 5M655 293l10 3l10 3l10 3l11 3l10 3l10 3l7 6l9 6l6 5l7 7l9 5l6 6M886 460l6 6M655 293l10 3l10 3l10 3l11 3l10 3l10 3l10 2l10 3l9 6l5 6l8 6l10 6l7 7l7 6M891 454l8 6M655 293l10 3l10 3l10 3l11 3l10 3l10 3l10 2l10 3l11 3l10 3l6 6l10 6l5 7l10 6l5 5l9 6M898 448l8 6M655 293l10 3l10 3l10 3l11 3l10 3l10 3l10 2l10 3l11 3l10 3l10 3l10 3l7 6l8 6l6 7l10 6l7 6l9 5M906 442l6 6M655 293l10 3l10 3l10 3l11 3l10 3l10 3l10 2l10 3l11 3l10 3l10 3l10 3l10 3l11 3l7 6l7 6l8 6l8 7l8 6l8 6M913 436l6 6M655 293l10 3l10 3l10 3l11 3l10 3l10 3l10 2l10 3l11 3l10 3l10 3l10 3l10 3l11 3l10 3l10 3l8 7l8 5l7 5l9 7l7 6l5 6M919 430l7 6M655 293l10 3l10 3l10 3l11 3l10 3l10 3l10 2l10 3l11 3l10 3l10 3l10 3l10 3l11 3l10 3l10 3l10 3l11 3l7 5l8 7l7 7l6 5l9 7l7 6M926 424l7 6M655 293l10 3l10 3l10 3l11 3l10 3l10 3l10 2l10 3l11 3l10 3l10 3l10 3l10 3l11 3l10 3l10 3l10 3l11 3l10 3l10 3l8 6l7 5l7 7l6 6l9 6l5 7M934 418l7 6M655 293l10 3l10 3l10 3l11 3l10 3l10 3l10 2l10 3l11 3l10 3l10 3l10 3l10 3l11 3l10 3l10 3l10 3l11 3l10 3l10 3l10 3l11 3l7 5l8 7l7 6l6 5l9 7l5 5M943 412l5 6M655 293l10 3l10 3l10 3l11 3l10 3l10 3l10 2l10 3l11 3l10 3l10 3l10 3l10 3l11 3l10 3l10 3l10 3l11 3l10 3l10 3l10 3l11 3l10 3l10 3l7 6l7 6l8 5l7 7l6 6l7 6M948 406l7 6M655 293l10 3l10 3l10 3l11 3l10 3l10 3l10 2l10 3l11 3l10 3l10 3l10 3l10 3l11 3l10 3l10 3l10 3l11 3l10 3l10 3l10 3l11 3l10 3l10 3l10 3l11 3l7 6l6 6l8 5l7 7l5 6l8 6M655 293l10 3l10 3l10 3l11 3l10 3l10 3l10 2l10 3l11 3l10 3l10 3l10 3l10 3l11 3l10 3l10 3l10 3l11 3l10 3l10 3l10 3l11 3l10 3l10 3l10 3l11 3l10 3l10 3l9 6l6 5l6 7l7 5M655 293l10 3l10 3l10 3l11 3l10 3l10 3l10 2l10 3l11 3l10 3l10 3l10 3l10 3l11 3l10 3l10 3l10 3l11 3l10 3l10 3l10 3l11 3l10 3l10 3l10 3l11 3l10 3l10 3l11 3l10 2l8 6l6 6M655 293l10 3l10 3l10 3l11 3l10 3l10 3l10 2l10 3l11 3l10 3l10 3l10 3l10 3l11 3l10 3l10 3l10 3l11 3l10 3l10 3l10 3l11 3l10 3l10 3l10 3l11 3l10 3l10 3l11 3l10 2l10 3l10 3M655 293l10 3l10 3l10 3l11 3l10 3l10 3l10 2l10 3l11 3l10 3l10 3l10 3l10 3l11 3l10 3l10 3l10 3l11 3l10 3l10 3l10 3l11 3l10 3l10 3l10 3l11 3l10 3l10 3l11 3l10 2l10 3l10 3M655 293l10 3l10 3l10 3l11 3l10 3l10 3l10 2l10 3l11 3l10 3l10 3l10 3l10 3l11 3l10 3l10 3l10 3l11 3l10 3l10 3l10 3l11 3l10 3l10 3l10 3l11 3l10 3l10 3l11 3l10 2l10 3l10 3M655 293l10 3l10 3l10 3l11 3l10 3l10 3l10 2l10 3l11 3l10 3l10 3l10 3l10 3l11 3l10 3l10 3l10 3l11 3l10 3l10 3l10 3l11 3l10 3l10 3l10 3l11 3l10 3l10 3l11 3l10 2l10 3l10 3M655 293l10 3l10 3l10 3l11 3l10 3l10 3l10 2l10 3l11 3l10 3l10 3l10 3l10 3l11 3l10 3l10 3l10 3l11 3l10 3l10 3l10 3l11 3l10 3l10 3l10 3l11 3l10 3l10 3l11 3l10 2l10 3l10 3M655 293l10 3l10 3l10 3l11 3l10 3l10 3l10 2l10 3l11 3l10 3l10 3l10 3l10 3l11 3l10 3l10 3l10 3l11 3l10 3l10 3l10 3l11 3l10 3l10 3l10 3l11 3l10 3l10 3l11 3l10 2l10 3l10 3M655 293l10 3l10 3l10 3l11 3l10 3l10 3l10 2l10 3l11 3l10 3l10 3l10 3l10 3l11 3l10 3l10 3l10 3l11 3l10 3l10 3l10 3l11 3l10 3l10 3l10 3l11 3l10 3l10 3l11 3l10 2l10 3l10 3M655 293l10 3l10 3l10 3l11 3l10 3l10 3l10 2l10 3l11 3l10 3l10 3l10 3l10 3l11 3l10 3l10 3l10 3l11 3l10 3l10 3l10 3l11 3l10 3l10 3l10 3l11 3l10 3l10 3l11 3l10 2l10 3l10 3M655 293l10 3l10 3l10 3l11 3l10 3l10 3l10 2l10 3l11 3l10 3l10 3l10 3l10 3l11 3l10 3l10 3l10 3l11 3l10 3l10 3l10 3l11 3l10 3l10 3l10 3l11 3l10 3l10 3l11 3l10 2l10 3l10 3M655 293l10 3l10 3l10 3l11 3l10 3l10 3l10 2l10 3l11 3l10 3l10 3l10 3l10 3l11 3l10 3l10 3l10 3l11 3l10 3l10 3l10 3l11 3l10 3l10 3l10 3l11 3l10 3l10 3l11 3l10 2l10 3l10 3M655 293l10 3l10 3l10 3l11 3l10 3l10 3l10 2l10 3l11 3l10 3l10 3l10 3l10 3l11 3l10 3l10 3l10 3l11 3l10 3l10 3l10 3l11 3l10 3l10 3l10 3l11 3l10 3l10 3l11 3l10 2l10 3l10 3M655 293l10 3l10 3l10 3l11 3l10 3l10 3l10 2l10 3l11 3l10 3l10 3l10 3l10 3l11 3l10 3l10 3l10 3l11 3l10 3l10 3l10 3l11 3l10 3l10 3l10 3l11 3l10 3l10 3l11 3l10 2l10 3l10 3M655 293l10 3l10 3l10 3l11 3l10 3l10 3l10 2l10 3l11 3l10 3l10 3l10 3l10 3l11 3l10 3l10 3l10 3l11 3l10 3l10 3l10 3l11 3l10 3l10 3l10 3l11 3l10 3l10 3l11 3l10 2l10 3l10 3M655 293l10 3l10 3l10 3l11 3l10 3l10 3l10 2l10 3l11 3l10 3l10 3l10 3l10 3l11 3l10 3l10 3l10 3l11 3l10 3l10 3l10 3l11 3l10 3l10 3l10 3l11 3l10 3l10 3l11 3l10 2l10 3l10 3M655 293l10 3l10 3l10 3l11 3l10 3l10 3l10 2l10 3l11 3l10 3l10 3l10 3l10 3l11 3l10 3l10 3l10 3l11 3l10 3l10 3l10 3l11 3l10 3l10 3l10 3l11 3l10 3l10 3l11 3l10 2l10 3l10 3M655 293l10 3l10 3l10 3l11 3l10 3l10 3l10 2l10 3l11 3l10 3l10 3l10 3l10 3l11 3l10 3l10 3l10 3l11 3l10 3l10 3l10 3l11 3l10 3l10 3l10 3l11 3l10 3l10 3l11 3l10 2l10 3l10 3M655 293l10 3l10 3l10 3l11 3l10 3l10 3l10 2l10 3l11 3l10 3l10 3l10 3l10 3l11 3l10 3l10 3l10 3l11 3l10 3l10 3l10 3l11 3l10 3l10 3l10 3l11 3l10 3l10 3l11 3l10 2l10 3l10 3M655 293l10 3l10 3l10 3l11 3l10 3l10 3l10 2l10 3l11 3l10 3l10 3l10 3l10 3l11 3l10 3l10 3l10 3l11 3l10 3l10 3l10 3l11 3l10 3l10 3l10 3l11 3l10 3l10 3l11 3l10 2l10 3l10 3M655 293l10 3l10 3l10 3l11 3l10 3l10 3l10 2l10 3l11 3l10 3l10 3l10 3l10 3l11 3l10 3l10 3l10 3l11 3l10 3l10 3l10 3l11 3l10 3l10 3l10 3l11 3l10 3l10 3l11 3l10 2l10 3l10 3M655 293l10 3l10 3l10 3l11 3l10 3l10 3l10 2l10 3l11 3l10 3l10 3l10 3l10 3l11 3l10 3l10 3l10 3l11 3l10 3l10 3l10 3l11 3l10 3l10 3l10 3l11 3l10 3l10 3l11 3l10 2l10 3l10 3M655 293l10 3l10 3l10 3l11 3l10 3l10 3l10 2l10 3l11 3l10 3l10 3l10 3l10 3l11 3l10 3l10 3l10 3l11 3l10 3l10 3l10 3l11 3l10 3l10 3l10 3l11 3l10 3l10 3l11 3l10 2l10 3l10 3M655 293l10 3l10 3l10 3l11 3l10 3l10 3l10 2l10 3l11 3l10 3l10 3l10 3l10 3l11 3l10 3l10 3l10 3l11 3l10 3l10 3l10 3l11 3l10 3l10 3l10 3l11 3l10 3l10 3l11 3l10 2l10 3l10 3M655 293l10 3l10 3l10 3l11 3l10 3l10 3l10 2l10 3l11 3l10 3l10 3l10 3l10 3l11 3l10 3l10 3l10 3l11 3l10 3l10 3l10 3l11 3l10 3l10 3l10 3l11 3l10 3l10 3l11 3l10 2l10 3l10 3M655 293l10 3l10 3l10 3l11 3l10 3l10 3l10 2l10 3l11 3l10 3l10 3l10 3l10 3l11 3l10 3l10 3l10 3l11 3l10 3l10 3l10 3l11 3l10 3l10 3l10 3l11 3l10 3l10 3l11 3l10 2l10 3l10 3M655 293l10 3l10 3l10 3l11 3l10 3l10 3l10 2l10 3l11 3l10 3l10 3l10 3l10 3l11 3l10 3l10 3l10 3l11 3l10 3l10 3l10 3l11 3l10 3l10 3l10 3l11 3l10 3l10 3l11 3l10 2l10 3l10 3M577 434l4-4l4-4l4-4l3-4l4-4l4-4l4-4l5-4l5-4l4-3l4-4l5-4l4-4l5-5l5-3l5-4l6-4l5-3l4-5l5-4l5-4l5-3l5-5l5-4l4-4l5-4M581 437l5-4l3-3l6-4l3-4l3-4l5-4l4-4l4-4l5-4l3-4l4-4l6-4l5-4l4-4l5-4l5-3l4-5l6-3l4-4l5-4l7-4l4-4l5-4l4-4l5-4l4-4l6-4M590 438l4-4l5-5l4-4l3-3l6-4l3-5l3-3l5-5l3-3l5-4l5-4l5-4l3-4l6-4l5-4l5-3l6-4l4-5l6-3l5-4l5-4l4-4l5-3l4-5l5-4l5-4M595 441l5-3l4-4l4-4l4-4l4-5l4-3l5-5l3-4l4-3l5-5l4-3l5-5l4-4l5-3l5-4l5-4l5-4l4-3l6-4l6-4l4-4l6-4l4-4l5-4l5-4l3-4l5-4M605 442l4-5l4-4l4-4l4-3l4-5l4-3l4-5l5-4l4-4l4-4l3-4l6-4l4-4l5-4l4-3l7-5l4-3l5-4l6-4l4-4l6-3l5-5l4-3l5-4l5-4l5-4M609 445l4-4l4-4l6-4l4-4l3-5l4-3l4-4l4-4l5-4l3-5l4-4l7-4l2-3l5-4l7-4l4-4l6-4l5-3l3-4l7-4l4-4l6-3l3-4l5-4l5-4l4-4l4-5M619 445l5-3l4-5l4-4l3-4l4-4l5-5l3-4l4-4l4-4l4-4l5-4l5-3l4-4l5-4l6-5l4-3l6-3l5-4l5-4l5-4l5-4l4-3l6-4l6-5l2-3l5-5M624 449l4-5l5-4l2-3l6-5l3-3l4-5l4-4l4-4l4-5l3-3l6-4l4-4l6-4l4-4l4-4l6-4l5-4l6-3l6-4l3-4l6-3l5-4l5-3l4-5l5-3l4-4l4-4M633 449l6-4l3-4l4-4l4-4l4-5l3-4l3-5l5-4l3-4l6-3l3-4l5-5l5-3l6-4l4-4l7-4l3-3l6-4l5-4l5-3l6-4l4-3l5-5l6-4l3-3l5-5M639 453l4-5l3-3l5-4l5-5l3-4l3-4l5-5l3-4l4-4l4-4l5-4l3-4l7-4l5-4l5-4l4-4l5-3l6-4l6-3l4-4l5-3l5-5l5-3l4-3l6-5l3-3l4-5M647 453l5-4l3-5l4-4l5-5l4-4l3-3l4-5l4-4l4-4l4-4l5-4l4-4l5-5l6-3l5-3l5-4l4-4l7-4l4-3l6-4l4-3l7-4l3-4l5-3l5-4l4-5M653 456l4-4l5-4l3-5l3-4l5-4l4-4l3-4l5-5l3-4l4-4l5-4l4-4l5-4l6-3l4-4l5-4l5-3l5-4l6-4l6-3l5-4l5-3l3-4l6-4l5-4l4-3l3-5M662 456l4-4l5-4l3-4l3-4l4-5l5-4l3-5l4-4l4-4l5-4l3-4l7-4l3-4l6-4l6-3l4-4l5-3l6-4l4-3l6-4l6-3l3-5l6-3l4-4l4-3l5-5M667 460l4-4l4-4l5-4l3-5l2-4l5-5l3-3l5-5l4-4l3-4l5-5l5-3l4-4l6-3l5-5l5-3l6-3l6-4l4-4l4-3l8-4l4-3l4-5l6-3l4-4l3-3l4-5M676 461l4-5l3-4l4-5l5-4l3-4l4-5l3-4l5-4l3-4l4-4l4-4l6-5l5-3l4-4l6-4l6-3l5-4l6-3l5-3l5-4l5-4l4-4l6-3l5-4l3-4l4-4M681 464l4-4l4-4l4-4l3-5l3-4l5-4l4-5l3-4l4-4l4-4l4-4l6-4l4-4l6-4l6-4l3-3l6-3l6-5l5-3l5-4l6-4l4-3l6-3l4-4l3-4l4-4l5-3M689 465l4-5l5-5l3-4l4-4l3-4l5-5l2-4l6-5l2-3l6-4l4-4l4-5l6-3l6-4l3-4l7-4l6-3l5-3l5-4l5-3l5-4l5-4l4-4l6-3l3-4l5-4M694 468l4-3l4-5l4-4l5-5l2-4l4-5l4-4l4-4l4-4l5-4l4-4l4-4l5-4l6-4l3-4l6-3l5-4l6-3l5-4l6-3l4-4l5-4l7-4l3-3l6-4l3-3l3-5M703 468l5-4l4-4l3-5l3-4l4-4l4-5l4-4l5-4l3-4l5-5l3-3l5-5l5-3l6-4l3-4l7-3l6-4l6-3l4-4l5-3l5-4l5-4l6-3l2-4l5-4l4-4M709 472l3-4l4-4l4-4l3-5l5-4l3-5l3-3l4-5l3-4l5-4l6-5l5-3l4-4l4-4l6-4l5-3l6-4l5-4l6-3l3-3l7-4l4-3l5-4l5-4l4-4l4-4l5-4M717 473l3-5l4-4l4-4l4-4l3-5l4-5l3-4l6-4l4-4l3-5l6-3l4-3l4-5l6-4l5-4l5-3l5-3l6-4l5-3l6-4l5-4l5-4l5-3l4-3l4-4l5-5M721 477l5-5l3-4l4-4l4-4l4-4l3-5l4-4l4-5l3-4l5-3l4-5l5-4l4-4l6-4l6-3l4-5l5-2l7-4l4-4l6-3l5-4l4-4l6-4l5-3l3-3l5-4l3-5M729 477l5-5l3-4l4-4l3-5l6-3l2-5l4-4l4-4l4-4l6-4l3-5l5-3l6-5l4-3l5-4l6-4l6-3l4-3l6-4l5-4l5-4l4-3l6-4l4-4l4-4l4-4M734 481l4-5l4-4l3-4l5-4l4-5l4-4l4-4l2-4l6-4l4-4l4-4l4-4l5-5l4-3l5-3l6-5l5-3l7-4l4-4l7-3l3-4l7-3l3-4l5-4l6-4l3-4l4-3M743 480l4-4l3-3l4-4l4-5l4-5l3-4l5-4l3-5l5-3l3-4l5-4l5-4l5-4l5-3l6-4l4-4l6-4l6-3l4-4l7-4l3-3l7-4l2-4l6-4l5-4l4-4M747 484l3-3l5-4l4-5l4-4l3-4l6-4l1-4l5-5l5-4l3-4l5-4l5-3l4-4l5-4l6-4l4-3l6-4l6-5l4-3l5-3l5-4l6-4l5-3l4-4l5-4l4-5l5-4M755 485l6-4l3-4l4-5l4-4l4-3l3-5l4-5l5-3l2-4l6-4l4-4l4-4l4-4l6-4l6-3l5-4l5-5l5-2l5-5l5-3l5-4l6-3l5-4l4-4l4-4l5-4M760 489l4-4l4-4l5-5l4-3l4-5l2-4l4-4l4-3l5-5l3-4l6-4l4-4l5-4l5-4l4-3l6-4l4-4l5-4l6-4l6-3l5-4l4-4l5-4l6-4l4-4l4-4l5-4M769 489l4-4l4-5l5-3l3-4l4-5l3-4l4-3l4-5l5-4l4-3l5-4l4-4l5-4l4-4l6-4l5-4l5-4l5-3l6-4l5-4l4-4l6-3l4-5l4-3l5-4l5-5M772 493l6-4l3-4l5-4l3-5l4-3l4-4l4-4l3-4l5-4l3-4l6-4l4-4l5-4l5-4l4-3l6-5l4-3l6-4l5-4l6-4l5-4l4-4l5-4l6-4l4-3l3-5l6-4M782 493l5-4l2-4l5-4l4-4l4-4l4-4l4-4l4-4l3-4l6-4l4-4l3-3l6-4l4-4l6-5l5-3l5-4l5-3l5-5l6-4l4-4l5-3l5-4l4-5l5-4l5-4M786 497l3-4l6-4l3-4l3-4l5-4l4-4l4-4l4-4l5-4l3-3l5-5l5-4l5-3l4-4l6-4l5-4l5-4l4-3l5-5l5-4l5-4l6-4l5-4l4-4l4-4l5-4l5-4M794 497l6-4l3-4l4-3l4-5l4-3l4-4l4-4l4-5l4-4l5-4l4-4l6-3l3-4l6-4l4-4l5-3l5-5l5-4l5-4l7-4l4-4l4-3l5-5l5-4l5-4l4-4M798 501l6-4l3-4l4-4l6-4l3-3l3-5l5-3l4-4l4-4l4-4l4-4l6-4l4-4l4-3l5-4l5-4l5-5l5-4l6-3l5-4l5-5l3-3l6-5l5-4l4-3l5-5l5-4M807 501l4-4l5-3l5-5l4-3l4-4l4-4l4-4l3-4l5-4l4-4l5-4l4-4l6-4l4-4l5-3l5-5l5-4l5-4l5-4l4-4l6-4l3-4l6-3l4-5l5-4l4-4M813 505l4-4l4-4l5-4l4-4l3-3l5-5l4-3l3-4l6-4l3-4l6-4l4-4l5-4l4-4l5-4l4-4l6-4l4-4l6-4l4-3l4-4l5-5l6-4l5-4l4-4l5-4l5-4M820 505l6-4l3-4l6-4l2-3l4-4l6-5l4-3l3-4l6-4l4-4l3-3l6-5l5-4l4-3l5-4l4-4l6-5l4-3l6-4l4-5l5-4l4-4l5-4l4-4l6-4l5-4M825 509l4-4l5-4l5-4l4-4l4-3l5-4l4-4l4-4l5-4l4-4l5-3l4-4l4-5l5-3l5-5l4-4l4-4l7-4l3-3l4-5l6-4l4-4l5-4l5-4l6-4l4-4l5-4M835 508l3-3l6-4l3-4l4-3l5-5l4-4l4-3l5-4l6-4l2-4l5-4l5-4l4-3l5-5l5-4l5-3l5-4l4-5l4-4l6-4l4-4l5-4l5-4l4-4l5-4l4-5M839 512l4-4l5-3l4-4l4-4l5-4l4-4l5-4l4-3l4-4l5-4l4-4l5-4l4-4l5-4l5-4l4-4l5-4l4-4l5-4l5-4l4-4l5-4l5-4l5-4l4-4l5-4l5-4M825 509l10-1l8 0M813 505l7 0l9 0l9 0l10 0M798 501l9 0l10 0l9 0l8 0l10 0l8 0M786 497l8 0l10 0l7 0l10 0l8 0l10 0l8 0l9 0M772 493l10 0l7 0l11 0l7 0l9 1l10-1l9 0l8 0l8 1l10-1M760 489l9 0l9 0l9 0l8 0l8 0l8 0l10 0l9 0l7 1l10 0l9-1l9 0M747 484l8 1l9 0l9 0l8 0l8 0l9 0l9 1l10-1l8 1l8 0l8 0l11 0l8-1l10 0M734 481l9-1l7 1l11 0l7 0l9-1l9 1l8 0l7 0l10 0l9 1l9 0l9-1l9 0l9 1l8 0l10 0M721 477l8 0l9-1l9 0l8 1l9 0l9-1l9 1l7-1l9 1l8 0l9 1l8-1l10 1l9 0l9 0l9 0l9 0l9 0M709 472l8 1l9-1l8 0l8 0l8 1l9-1l9 0l9 1l8 0l8 0l9 0l8 0l9 1l9 0l9 0l8 0l9 0l11 0l10 0l8 0M694 468l9 0l9 0l8 0l9 0l8 0l8 0l9 1l9-1l9 0l9 0l8 0l8 1l9 0l8 0l9 1l9 0l8 0l11 0l9 0l9 0l8 0l10 0M681 464l8 1l9 0l10-1l8 0l8 0l9 0l8 0l9 0l8 0l8 0l10 1l7-1l9 0l9 1l9 0l8 0l9 0l9 1l9 0l9 0l10 0l10 1l8-1l10 0M667 460l9 1l9-1l8 0l9 0l10 0l8 0l8 0l9 0l7-1l10 0l8 0l10 1l7 0l8 0l9 1l8 0l10 0l9 0l8 0l9 1l9 0l11 0l7 1l11 0l9-1l9 0M653 456l9 0l9 0l9 0l9 0l9-1l8 1l9-1l8 0l9 1l9 0l9 0l8-1l7 0l8 1l10-1l8 2l9-1l9 1l8 0l9 1l10-1l8 1l10 0l10 0l9 0l9 0l9 1l10-1M639 453l8 0l10-1l9 0l9 0l8 0l10 0l8-1l10 0l7 0l10 0l7 0l9 0l8 0l10 0l8 0l8 0l10 1l8 0l9 0l7 1l11 0l8 0l9 0l10 1l8 0l11 0l9 0l9 1l9-1l10 0M624 449l9 0l10-1l9 1l10-1l9 0l9 0l7-1l9 0l9 0l8 0l9 0l9-1l8 0l9 1l8 0l8 0l9-1l10 1l7 1l9 0l10 1l9 0l9 0l9 0l10 1l8 0l10 0l9 0l9 1l10-1l9 0l9 0M609 445l10 0l9-1l11 1l7 0l9-1l10-1l9 1l9-1l9 0l7 0l9 0l9-1l9 0l8 1l8-1l10 0l8 1l10 0l8 0l8 0l10 1l9 0l9 1l8 0l8 1l11 0l8 0l9 1l10-1l10 0l9 1l9-1l10 1l9-1M595 441l10 1l8-1l11 1l9-2l9 1l9 0l8-1l9-1l9 1l8-1l10 0l9 0l9-1l8 0l9 0l8 0l10 0l7 0l9 1l10 0l7 0l10 0l9 1l9 0l9 1l9 0l9 1l9 0l10 0l8 1l10 0l9-1l9 1l9-1l11 1l8-1M581 437l9 1l10 0l9-1l8 0l11 0l7 0l11 0l10-1l8-1l9 0l8 0l9-1l9 0l9 0l7 0l10 0l10 0l6 0l11 0l8 1l10 0l8 0l8 0l10 1l8 0l10 0l9 1l9 0l8 1l11 0l8 0l9 1l10-1l10 0l9 0l10 0l8 0l9 0M577 434l9-1l8 1l10 0l9-1l10 0l9 0l9-1l9 1l9-1l9-1l9 0l9 0l7 0l9-1l9 0l10-1l8 1l9 0l8 0l9-1l9 1l9 0l9 1l9 0l9 1l8 0l11 0l8 1l9 1l10-1l10 1l8 1l9-1l10 0l9 0l9 1l9 0l9-1l10 0M581 430l8 0l10-1l9 1l9-1l10 0l8 0l9 0l10-1l8 0l9 0l9-1l9-1l9 0l9 0l8 0l8 0l11 0l9-1l9 0l9 1l8 0l9 1l9-1l9 1l9 1l9 0l9 1l10 0l9 0l9 1l10 0l8 0l9 0l10 0l10 0l9 1l7-1l11 0l8 0M585 426l10 0l8-1l9 1l9 0l9-2l9 1l9-1l9 0l10-1l8 0l10-1l8 0l9 0l8 0l9 0l10 0l9 0l8 0l11 0l8 1l8-1l11 0l7 1l10 1l10 0l9 1l9 0l9 0l8 1l10 0l9 1l9-1l10 1l9-1l9 1l9-1l9 0l9 0l9 0M589 422l9 0l8 0l10-1l9 0l9 0l10-1l8 0l8-1l10 0l9 0l9-1l9 0l8 0l9 0l9 0l10 0l9 0l9-1l10 1l8 0l10 0l9 1l8 1l11 0l8 1l10 0l8 0l10 0l9 1l9 1l9-1l9 0l10 1l8-1l9 1l10-1l8 0l10 0l9 0M592 418l9 0l11 0l8 0l9 0l9-1l9-1l9 0l9-1l9 0l9 0l9-1l10 0l8-1l8 1l11 0l8-1l10 1l9 0l9 0l10 0l10 1l8 0l9 0l9 1l10 1l9-1l8 1l10 1l9 0l9 0l9 0l11 0l8 0l9 0l8 0l9 0l9 0l10 0l9 0M596 414l10 0l9-1l10 0l8 0l9 0l9-1l9-1l8 0l10 0l9 0l10-1l8 0l10 0l9-1l9 1l10 0l10 0l9 0l9 0l9 0l9 0l10 1l8 1l10 0l10 0l8 2l9-1l10 1l9 0l9 0l8 0l10 0l7 1l9-1l11 0l8 0l9 0l9 0l9 0M600 410l10 0l8 0l10-1l10 0l9 0l8-1l8 0l11 0l9-1l9 0l9-1l11 0l7 0l10 0l10 0l10 0l7 0l9 0l11 1l9 0l9 1l11 0l9 0l9 1l8 0l9 0l10 1l9 0l9 0l8 0l10 0l8 1l9-1l9 1l10-1l7 0l11 0l8 0l9 0M604 406l10 0l9-1l9 1l10-1l8-1l9 0l10 0l8 0l9-1l10 0l10-1l9 0l10 1l8-1l12 0l7 0l10 1l10 0l10 0l8 1l11 0l8 1l9-1l9 1l9 1l9 0l10 0l8 0l9 0l9 1l10-1l8 0l9 0l8 0l10 0l9 0l9 0l8-1l10 1M609 402l10 0l7 0l11-1l9 0l8-1l10 0l9 0l9-1l11 0l8-1l11 1l9-1l9 0l9 0l9 1l11-1l8 1l11 0l9 0l9 1l9 0l10 1l10 0l9 0l7 1l9 0l9 0l10 1l8-1l9 1l9-1l9 0l8 1l9-1l10 0l9 0l9 0M614 398l8 0l9 0l10 0l8-1l12-1l8 1l10-1l8 0l11-1l9 0l9 0l11 0l8 0l10 0l9 1l11-1l8 1l11 0l9 0l8 1l10 0l9 0l8 0l9 1l10 0l9 1l8-1l9 0l10 0l7 0l9 0l10 0l8 0l8 0l11 0M618 395l8-1l10 0l10-1l9 0l8 0l10 0l10-1l10 0l10-1l9 1l9-1l10 0l10 1l9-1l10 0l10 1l8 0l10 0l8 1l11 0l9 0l9 0l10 1l9 0l8 1l9 0l9-1l7 1l10 0l8-1l9 0l9 0l9 0M622 391l10-1l9 0l9-1l9 0l9 0l10 0l9-1l10 0l10-1l10 1l9 0l10 0l11 0l9 0l9 0l10 0l9 1l9 0l10 0l9 0l8 0l9 1l9 0l8 0l10 1l9 0l9-1l8 1l8-1l10 0l9 0M627 387l10-1l7 0l11 0l9-1l11 0l9-1l9 0l11 0l8 0l9 0l10 0l11 0l9 0l10 1l9-1l10 1l8 0l10 0l9 1l10-1l9 0l9 1l8 0l9 0l9 1l8 0l9-1l9 0l9 0M631 383l10-1l9 0l10 0l8 0l11-1l9 0l10-1l9 1l11-1l10 0l9 0l9 1l9 0l11 0l10-1l9 1l8 0l10 0l9 1l10 0l9 0l8 0l10 0l8 0l8 0l9 1l9-1M636 378l10 0l9 0l10 0l10-1l10 0l9 1l10-1l9 0l11 0l8 0l11 0l9 0l11 0l8 0l9 0l10 0l10 0l9 1l8 0l9 1l8 0l9-1l9 0l9 0l9 0M641 375l10 0l9 0l10-1l9 0l11 0l9 0l11-1l8 0l10 0l10 0l10 0l10 1l9 0l8-1l11 1l8-1l9 1l8 0l10 0l9 1l9 0l8-1l9 1M646 371l9-1l11 1l8 0l10-1l9 0l11 0l9-1l10 1l10 0l9 0l11 0l8-1l10 0l10 1l9 0l10 0l9 0l7 0l9 0l10 0l7 0M652 367l9 0l9-1l10 1l10-1l10 0l9 0l10 0l10 0l9-1l11 1l7 0l11 0l10 0l9 0l7 0l10 0l9 1l8-1l10 0M657 364l8-1l11 0l10 0l8-1l10 0l10 0l10 0l9 1l10-1l9 0l10 0l9 0l10 0l8 0l8 0l11 0l7 0M661 359l9 0l11 0l9 0l10 0l10 0l8 0l11 0l9-1l9 1l10 0l10-1l8 1l9 0l9-1l9 1M666 355l11 0l9 0l10 0l9-1l8 1l11 0l9-1l11 0l9 0l9 1l9 0l9-1l8 0M671 351l10 0l9 0l10 0l9 0l9 0l12-1l8 1l9 0l9 0l10-1l8 0M676 348l10-1l9 1l10-1l9 0l9 0l9 0l10 0l10-1l8 0M681 343l9 0l9 0l11 0l9 0l8 0l10-1l9 1M686 339l9 0l9 0l9 0l11 0l7-1M690 335l9 0l10 0l9 0M695 331l10 0M577 434l4 3M581 430l5 3l4 5l5 3M585 426l4 4l5 4l6 4l5 4l4 3M589 422l6 4l4 3l5 5l5 3l4 4l6 4l5 4M592 418l6 4l5 3l5 5l5 3l4 4l7 5l4 2l5 5l6 4M596 414l5 4l5 4l6 4l5 3l6 4l5 4l5 3l6 5l4 3l4 5l6 3M600 410l6 4l6 4l4 3l5 5l6 3l5 4l3 4l7 4l4 4l6 4l5 3l5 4l5 4M604 406l6 4l5 3l5 5l5 3l5 3l5 5l6 3l5 5l5 4l4 3l7 4l4 4l5 4l5 5l5 3M609 402l5 4l4 4l7 3l4 5l5 3l5 4l5 4l6 4l6 3l3 4l6 3l6 5l4 4l5 4l5 4l4 5l5 3M614 398l5 4l4 3l5 4l5 4l5 4l6 3l4 4l6 4l5 4l5 3l4 4l6 5l6 4l3 4l6 4l4 4l5 5l5 3l6 4M618 395l4 3l4 4l6 4l6 3l4 4l5 3l5 4l5 4l5 4l6 3l5 4l4 5l6 3l4 4l6 5l5 3l4 5l6 4l4 4l5 5l4 4M622 391l4 3l5 4l6 3l5 4l5 4l4 3l5 4l4 3l7 4l4 5l6 3l4 4l4 4l7 4l4 4l5 4l5 5l6 4l4 4l4 4l6 4l3 5l5 4M627 387l5 3l4 4l5 4l5 3l4 3l5 4l5 3l5 4l5 4l5 4l5 4l6 4l4 3l5 5l4 4l6 4l6 4l4 4l5 5l4 4l5 4l5 4l4 4l5 4l4 4M631 383l6 3l4 4l5 3l3 4l5 3l5 4l4 4l5 3l6 4l5 4l6 3l4 4l4 5l6 3l5 5l4 4l5 4l5 4l5 4l5 5l5 4l4 4l5 4l5 4l3 5l5 4l5 4M636 378l5 4l3 4l6 3l5 4l6 3l3 4l5 4l5 4l4 3l5 4l5 3l5 4l5 4l4 4l6 4l5 4l4 4l5 5l6 4l4 5l5 4l4 4l4 4l5 5l5 4l6 4l3 4l5 4l3 4M641 375l5 3l4 4l5 4l4 3l4 4l6 4l4 3l4 4l6 3l4 4l5 3l5 4l5 4l5 4l4 4l4 4l6 4l5 4l5 4l4 5l6 5l3 3l6 5l4 5l5 3l5 5l4 4l5 4l5 4l4 4l4 4M646 371l5 4l4 3l5 4l4 3l4 4l5 4l6 3l3 3l4 4l6 4l5 3l5 4l3 4l5 4l5 4l6 3l4 5l5 4l4 5l5 3l5 5l6 5l4 3l4 5l5 4l5 4l5 4l4 4l4 5l6 4l2 4l5 4l4 4M652 367l3 3l5 5l5 3l3 4l7 3l3 4l5 3l4 4l6 3l3 4l5 3l4 4l5 3l4 5l5 4l4 4l6 4l6 4l3 4l4 4l6 5l4 4l6 4l4 4l4 5l6 4l5 5l5 4l4 4l3 4l6 4l5 4l4 4l3 4l6 4M657 364l4 3l5 4l4 3l5 3l4 4l5 3l3 4l6 4l5 3l3 3l5 4l6 4l3 4l3 4l5 4l6 4l5 4l4 4l3 4l7 4l4 4l4 5l6 4l3 4l7 5l4 5l5 3l4 5l4 3l5 5l4 4l5 4l4 4l4 4l6 4l3 4l5 4M661 359l4 4l5 3l4 5l5 3l6 3l3 4l5 3l4 4l6 3l4 4l5 4l3 3l4 4l5 3l5 5l4 4l5 4l5 3l3 5l6 4l3 4l5 5l4 4l6 4l3 5l6 4l4 4l6 4l4 5l5 4l3 4l6 5l4 3l5 5l5 3l5 4l3 4l6 3l4 4M666 355l4 4l6 4l4 4l4 3l6 4l4 4l4 2l6 4l3 3l5 5l4 3l5 3l4 5l4 3l4 4l4 3l5 5l4 4l6 3l3 4l5 6l4 4l6 4l3 3l5 5l5 4l4 5l5 4l5 5l5 4l4 4l5 4l6 4l4 4l5 4l3 4l5 4l4 4l5 3M671 351l6 4l4 4l5 4l4 3l3 4l6 4l5 3l3 4l5 3l5 4l4 3l6 4l3 3l3 4l6 4l4 4l4 4l4 3l6 5l4 4l3 4l6 5l4 4l4 4l5 4l5 5l3 5l5 4l5 4l5 4l4 4l5 5l5 4l5 4l5 3l5 4l4 4l5 4l4 4M676 348l5 3l5 4l4 4l4 3l6 4l4 4l6 3l3 4l5 3l3 4l5 4l5 3l4 4l4 3l6 4l4 4l4 4l3 4l5 4l4 5l4 3l4 4l5 5l3 4l5 4l4 5l6 4l4 4l4 5l6 4l4 4l5 5l4 3l6 5l4 4l4 4l6 3l4 4l5 4M681 343l5 4l4 4l6 4l4 4l4 3l5 4l4 3l5 4l6 4l4 3l3 4l5 4l5 4l4 3l3 4l4 3l4 4l6 4l3 4l4 4l4 4l5 5l4 4l4 4l5 4l5 5l3 4l6 4l4 5l5 4l4 4l5 5l5 4l5 4l5 3l3 5l6 4l4 4l5 3M686 339l4 4l5 5l5 3l5 3l5 5l4 3l5 4l4 4l5 3l4 4l5 3l5 4l5 4l3 3l4 5l5 2l3 5l3 3l6 4l4 4l4 4l5 4l3 4l4 5l5 5l4 4l5 4l4 5l3 4l5 4l6 4l4 4l5 5l5 4l5 4l5 3l5 5l4 3l5 4M690 335l5 4l4 4l6 4l4 4l4 4l5 4l6 3l5 4l4 4l5 3l5 4l3 4l5 3l5 4l4 3l5 4l2 4l5 4l4 4l4 3l5 5l3 4l3 4l5 4l4 5l4 4l5 4l5 5l4 4l5 4l3 5l5 3l5 5l4 4l5 4l6 4l5 4l4 3l5 4M695 331l4 4l5 4l6 4l4 4l4 4l6 4l5 4l4 4l5 2l4 5l6 3l4 4l3 4l6 4l4 3l5 4l3 4l5 3l4 4l3 4l4 3l4 5l3 5l5 4l4 4l3 4l6 4l4 5l4 4l5 4l4 4l5 4l4 5l5 4l6 4l3 4l6 4l4 4l6 3M705 331l4 4l4 4l6 4l4 4l7 3l3 4l5 4l5 4l6 4l4 4l5 4l5 3l3 4l4 3l5 4l3 4l6 4l3 3l3 5l4 4l5 3l3 4l5 5l4 4l3 4l5 4l4 5l4 4l3 5l6 3l4 4l4 5l5 4l5 4l6 4l5 4l4 4l5 4M718 335l6 4l3 4l5 4l6 4l6 3l3 5l5 3l4 4l5 3l6 5l4 3l5 3l4 5l4 4l4 3l5 4l3 4l5 4l4 4l2 4l4 4l4 5l5 4l3 4l4 4l5 4l4 5l5 4l5 4l4 4l4 4l6 4l4 4l5 4l6 4l3 4M731 338l6 4l5 5l5 4l6 3l4 5l5 3l5 4l4 3l4 4l5 4l5 4l3 4l5 4l3 4l5 4l4 3l4 5l5 3l3 4l4 5l4 4l4 4l4 4l3 5l4 4l5 4l4 4l5 4l4 4l6 4l3 5l7 4l3 3l6 4M746 343l6 3l4 5l6 4l5 3l4 4l6 4l4 4l5 4l4 3l3 4l5 4l5 4l4 4l4 4l4 4l3 3l5 5l4 3l3 4l3 5l5 4l4 4l4 4l5 5l4 4l3 5l6 3l5 4l4 4l5 5l4 3l5 4M760 346l6 4l5 5l4 4l6 3l5 4l4 4l4 3l6 4l3 4l4 5l5 3l4 4l4 4l5 4l2 4l4 4l4 5l3 3l5 4l3 5l5 4l5 4l3 4l4 5l5 3l5 4l5 4l4 4l5 4l5 4M774 350l6 4l4 5l5 3l4 4l7 4l3 4l6 4l3 4l5 3l3 4l5 4l3 4l6 4l2 5l4 3l4 4l4 5l4 4l4 4l5 4l3 5l4 4l5 4l5 3l4 5l5 4l4 4l5 3M788 354l5 4l4 4l6 4l6 4l2 4l6 4l5 4l4 3l3 5l6 4l2 4l4 4l4 4l5 4l4 4l3 4l4 5l4 4l4 3l4 4l5 4l4 4l5 5l5 3l4 4l5 4M802 359l6 3l4 5l4 3l5 4l5 5l5 3l4 4l3 4l6 4l3 4l3 4l5 4l4 4l4 4l3 4l4 4l4 4l4 4l5 4l5 4l3 5l5 3l5 4l5 4M815 362l5 4l5 4l5 5l4 4l5 3l4 4l3 4l6 5l4 4l3 3l4 4l5 4l4 4l3 4l4 4l5 5l4 3l4 4l5 4l3 4l6 5l4 3M830 366l5 4l4 5l4 3l6 4l3 4l4 5l5 4l3 3l5 5l3 3l4 4l4 4l6 4l3 5l4 3l5 4l3 5l6 3l4 5l4 3M842 370l5 4l5 4l5 4l4 5l4 4l5 3l3 4l4 4l4 5l5 3l4 4l4 4l3 4l5 5l5 4l3 4l5 3l4 4M856 375l5 3l4 4l4 5l5 3l3 5l6 3l3 5l5 3l3 5l3 4l6 3l3 5l5 3l3 4l5 4l5 4M870 378l4 5l4 3l4 5l5 4l3 3l5 4l4 4l4 4l3 4l5 4l5 4l4 4l5 4l4 4M883 382l4 4l3 4l5 4l4 4l5 4l4 4l4 5l5 3l3 4l4 4l5 4l4 4M896 386l4 4l4 4l5 4l3 5l4 3l6 4l3 4l4 4l5 4l4 4M909 390l4 4l4 4l4 4l5 4l3 4l5 4l5 4l4 4M922 394l3 4l6 4l4 4l5 4l3 4l5 4M936 398l4 4l4 4l4 4l4 4M949 402l3 3l5 5"/><path d="M240 488l23 7l24 7l24 6l24 7l24 7l24 7l24 7l24 7l23 7l23 6l23 7l23 7l23 6l24 7l23 7l24 7l23 6l24 7l23 7l23 7M240 508l12 4l22 7l23 5l23 8l25 7l22 7l23 5l25 9l23 6l25 6l24 8l22 6l25 7l22 7l25 7l24 8l22 5l23 7l25 8l24 6l11 3M239 528l23 7l23 7l24 8l21 5l24 7l24 8l22 7l24 6l22 6l26 7l23 5l26 9l23 5l24 7l24 9l24 6l23 6l24 8l22 7l25 7M240 548l10 2l23 8l25 8l21 7l23 6l24 7l22 8l23 7l24 6l26 7l22 6l24 6l25 5l25 9l24 6l23 8l22 8l26 8l24 6l24 7l11 4M240 567l23 6l23 9l25 7l22 7l24 9l23 8l24 7l23 7l23 4l25 7l25 6l23 7l23 5l22 6l23 9l26 8l22 7l23 8l26 7l22 7M240 586l10 3l25 9l25 7l22 8l25 10l25 10l25 8l23 6l22 4l25 6l22 4l22 6l25 6l24 6l22 7l24 9l22 7l24 10l24 7l24 9l10 2M240 606l23 6l26 9l22 8l26 11l24 9l23 7l26 9l22 6l23 4l24 5l23 5l22 3l24 6l22 7l24 10l23 8l24 10l22 9l25 6l22 8M240 626l11 4l23 6l26 10l23 9l22 8l27 11l21 6l24 9l24 5l25 5l23 3l21 3l25 6l24 8l21 7l24 9l23 10l26 10l21 7l25 8l11 2M240 647l23 7l23 8l22 7l25 10l22 8l24 8l24 9l22 5l25 5l23 4l26 7l22 3l25 8l24 6l22 8l25 9l23 11l24 7l21 7l25 8M240 669l12 4l22 6l23 8l23 9l23 8l23 8l22 6l24 8l23 6l23 5l25 5l24 5l25 6l23 7l26 9l24 8l23 9l23 7l23 8l23 6l13 5M240 691l24 8l22 6l24 8l23 7l20 8l24 7l23 6l26 6l22 7l24 7l24 6l25 7l23 4l24 9l23 5l25 11l22 6l25 8l24 8l23 6M240 712l11 3l23 8l24 6l25 9l23 7l24 7l23 5l22 7l25 7l23 7l25 7l22 6l23 5l24 8l25 7l23 7l24 8l24 6l23 8l24 8l10 2M240 733l24 7l22 6l27 8l23 8l25 6l23 7l26 8l23 7l22 5l22 8l23 7l23 6l23 7l23 6l25 6l22 8l24 6l25 7l22 7l23 7M240 754l11 4l24 7l24 7l25 7l24 7l25 7l24 7l24 7l23 6l23 7l23 7l23 6l22 7l23 6l24 7l23 7l24 7l24 7l23 7l23 6l11 3M240 488l0 20l-1 20l1 20l0 19l0 19l0 20l0 20l0 21l0 22l0 22l0 21l0 21l0 21M240 488l0 20l-1 20l1 20l0 19l0 19l0 20l0 20l0 21l0 22l0 22l0 21l0 21l0 21M240 488l0 20l-1 20l1 20l0 19l0 19l0 20l0 20l0 21l0 22l0 22l0 21l0 21l0 21M240 488l0 20l-1 20l1 20l0 19l0 19l0 20l0 20l0 21l0 22l0 22l0 21l0 21l0 21M240 488l0 20l-1 20l1 20l0 19l0 19l0 20l0 20l0 21l0 22l0 22l0 21l0 21l0 21M240 488l0 20l-1 20l1 20l0 19l0 19l0 20l0 20l0 21l0 22l0 22l0 21l0 21l0 21M240 488l0 20l-1 20l1 20l0 19l0 19l0 20l0 20l0 21l0 22l0 22l0 21l0 21l0 21M240 488l0 20l-1 20l1 20l0 19l0 19l0 20l0 20l0 21l0 22l0 22l0 21l0 21l11 25M240 488l0 20l-1 20l1 20l0 19l0 19l0 20l0 20l0 21l0 22l0 22l11 24l13 25l11 25M240 488l0 20l-1 20l1 20l0 19l0 19l0 20l0 20l0 21l12 26l12 26l10 24l12 23l13 26M240 488l0 20l-1 20l1 20l0 19l0 19l0 20l11 24l12 24l11 25l12 26l12 24l15 25l11 25M240 488l0 20l-1 20l1 20l0 19l10 22l13 23l11 24l12 26l11 25l13 26l13 25l13 24l12 24M240 488l0 20l-1 20l11 22l13 23l12 25l14 23l11 25l8 23l12 27l13 24l13 25l15 23l12 25M240 488l12 24l10 23l11 23l13 24l14 23l11 24l12 26l10 24l10 25l10 24l17 24l14 23l13 25M263 495l11 24l11 23l13 24l13 23l11 24l15 27l8 23l10 24l11 25l11 23l16 22l17 26l11 24M287 502l10 22l12 26l10 23l14 23l14 27l14 26l11 25l7 21l9 23l12 23l15 23l18 26l11 23M311 508l9 24l10 23l12 24l15 26l15 28l12 23l9 24l10 24l9 22l14 21l14 24l15 24l12 25M335 515l10 24l9 23l12 24l14 27l17 28l13 24l7 24l8 20l10 23l13 22l15 24l14 25l13 24M359 522l8 24l11 24l10 24l16 26l16 27l12 24l9 23l9 20l8 23l14 24l16 24l12 25l13 23M383 529l7 22l10 26l11 24l16 26l15 24l13 24l11 24l7 19l10 24l13 25l14 24l13 25l12 24M407 536l8 24l9 23l11 24l15 24l17 26l12 23l10 22l10 23l8 22l14 27l12 22l13 27l12 23M431 543l7 23l8 23l15 25l14 24l14 23l13 24l8 20l11 23l11 25l12 25l13 26l12 25l13 24M454 550l9 22l9 24l11 24l17 24l11 23l13 21l11 23l11 25l9 24l13 27l14 24l12 24l11 25M477 556l10 24l8 21l12 25l16 25l13 22l12 21l11 25l11 23l11 27l10 23l14 26l11 25l13 24M500 563l9 23l12 24l11 21l14 25l14 23l10 22l10 25l12 24l13 27l11 26l13 23l11 23l13 25M523 570l11 23l10 22l13 25l11 22l14 24l12 25l10 24l13 24l11 27l10 23l15 23l12 24l11 25M546 576l10 24l12 22l13 24l10 25l15 24l11 24l10 26l13 25l11 23l12 24l13 23l11 23l12 24M570 583l11 24l11 24l12 23l13 25l11 23l13 27l12 26l11 22l10 24l13 24l13 23l10 22l0 20M593 590l12 25l11 22l10 25l13 24l13 26l11 26l11 24l11 22l12 23l13 24l0 19l0 20l0 20M617 597l10 23l12 23l13 27l10 24l14 25l12 25l11 26l11 22l0 20l0 19l0 19l0 20l0 20M640 603l10 24l13 24l13 25l12 25l12 27l10 24l0 20l0 20l0 20l0 19l0 19l0 20l0 20M664 610l11 25l10 23l15 25l10 25l0 22l0 22l0 20l0 20l0 20l0 19l0 19l0 20l0 20M687 617l12 24l11 24l1 22l-1 21l0 22l0 22l0 20l0 20l0 20l0 19l0 19l0 20l0 20M710 624l0 20l0 21l1 22l-1 21l0 22l0 22l0 20l0 20l0 20l0 19l0 19l0 20l0 20M710 624l0 20l0 21l1 22l-1 21l0 22l0 22l0 20l0 20l0 20l0 19l0 19l0 20l0 20M240 488l0 20l-1 20l1 20l0 19l0 19l0 20l0 20l0 21l0 22l0 22l0 21l0 21l0 21M240 488l0 20l-1 20l1 20l0 19l0 19l0 20l0 20l0 21l0 22l0 22l0 21l0 21l0 21M263 495l-11 17l-13 16l1 20l0 19l0 19l0 20l0 20l0 21l0 22l0 22l0 21l0 21l0 21M287 502l-13 17l-12 16l-12 15l-10 17l0 19l0 20l0 20l0 21l0 22l0 22l0 21l0 21l0 21M311 508l-14 16l-12 18l-12 16l-10 15l-13 16l-10 17l0 20l0 21l0 22l0 22l0 21l0 21l0 21M335 515l-15 17l-11 18l-11 16l-12 16l-11 16l-12 14l-12 18l-11 17l0 22l0 22l0 21l0 21l0 21M359 522l-14 17l-15 16l-11 18l-8 16l-11 16l-11 16l-15 15l-11 18l-11 19l-12 18l0 21l0 21l0 21M383 529l-16 17l-13 16l-12 17l-9 17l-11 17l-11 16l-11 17l-14 16l-12 17l-10 20l-13 16l-11 18l0 21M407 536l-17 15l-12 19l-12 16l-9 19l-10 18l-10 17l-14 15l-15 14l-11 18l-11 18l-12 18l-10 17l-13 18M431 543l-16 17l-15 17l-12 17l-8 19l-8 20l-11 16l-16 14l-12 16l-13 17l-10 17l-12 16l-12 17l-11 19M454 550l-16 16l-14 17l-13 18l-7 19l-7 21l-13 15l-12 18l-17 13l-12 17l-10 16l-10 18l-10 16l-14 18M477 556l-14 16l-17 17l-11 18l-8 20l-7 20l-10 18l-17 15l-14 15l-13 17l-13 16l-7 17l-10 17l-12 17M500 563l-13 17l-15 16l-11 18l-11 17l-8 20l-10 20l-15 18l-14 15l-15 14l-11 17l-7 17l-9 16l-13 18M523 570l-14 16l-14 15l-12 19l-8 18l-8 19l-12 18l-14 19l-16 15l-13 17l-12 15l-7 16l-9 18l-11 18M546 576l-12 17l-13 17l-14 16l-7 18l-11 17l-10 19l-13 19l-16 15l-15 18l-9 15l-11 17l-5 19l-13 17M570 583l-14 17l-12 15l-12 16l-9 20l-12 16l-9 18l-13 17l-16 16l-15 19l-10 17l-8 17l-7 19l-12 17M593 590l-12 17l-13 15l-11 18l-11 16l-10 17l-12 15l-14 17l-11 20l-16 17l-11 19l-9 17l-8 17l-11 18M617 597l-12 18l-13 16l-11 15l-13 16l-8 17l-12 15l-13 17l-14 17l-14 19l-11 20l-8 18l-11 18l-10 17M640 603l-13 17l-11 17l-12 17l-13 17l-9 15l-12 15l-11 18l-13 17l-14 17l-11 21l-11 17l-10 19l-10 17M664 610l-14 17l-11 16l-13 19l-9 17l-11 16l-12 16l-14 15l-10 16l-15 18l-11 18l-11 18l-10 20l-10 17M687 617l-12 18l-12 16l-11 19l-13 16l-11 16l-11 17l-13 16l-12 15l-11 19l-13 18l-11 17l-11 19l-11 17M710 624l-11 17l-14 17l-9 18l-14 18l-10 18l-11 17l-14 16l-10 14l-12 18l-14 15l-9 19l-13 18l-11 17M710 624l0 20l0 21l-10 18l-12 18l-12 18l-13 19l-10 17l-13 15l-12 16l-12 17l-11 15l-11 17l-12 18M710 624l0 20l0 21l1 22l-1 21l-10 20l-12 16l-14 18l-10 15l-13 16l-13 16l-9 17l-13 17l-11 17M710 624l0 20l0 21l1 22l-1 21l0 22l0 22l-11 18l-14 14l-11 17l-11 16l-10 15l-13 17l-11 18M710 624l0 20l0 21l1 22l-1 21l0 22l0 22l0 20l0 20l-13 15l-10 18l-11 15l-11 16l-12 18M710 624l0 20l0 21l1 22l-1 21l0 22l0 22l0 20l0 20l0 20l0 19l-10 17l-13 15l-11 18M710 624l0 20l0 21l1 22l-1 21l0 22l0 22l0 20l0 20l0 20l0 19l0 19l0 20l-11 17M710 624l0 20l0 21l1 22l-1 21l0 22l0 22l0 20l0 20l0 20l0 19l0 19l0 20l0 20M710 624l0 20l0 21l1 22l-1 21l0 22l0 22l0 20l0 20l0 20l0 19l0 19l0 20l0 20M710 624l0 20l0 21l1 22l-1 21l0 22l0 22l0 20l0 20l0 20l0 19l0 19l0 20l0 20M710 624l0 20l0 21l1 22l-1 21l0 22l0 22l0 20l0 20l0 20l0 19l0 19l0 20l0 20M710 624l0 20l0 21l1 22l-1 21l0 22l0 22l0 20l0 20l0 20l0 19l0 19l0 20l0 20M710 624l0 20l0 21l1 22l-1 21l0 22l0 22l0 20l0 20l0 20l0 19l0 19l0 20l0 20M710 624l0 20l0 21l1 22l-1 21l0 22l0 22l0 20l0 20l0 20l0 19l0 19l0 20l0 20M710 624l0 20l0 21l1 22l-1 21l0 22l0 22l0 20l0 20l0 20l0 19l0 19l0 20l0 20"/><path d="M710 624l14-12l13-12l14-11l13-12l14-12l13-11l13-12l13-11l13-11l13-12l14-11l14-13l14-12l14-12l14-12l14-13l14-12l14-12l14-12l13-12M710 645l7-6l14-12l14-14l13-10l13-13l14-12l13-11l13-12l14-12l13-10l13-12l14-11l15-12l12-11l15-13l14-11l14-15l14-11l13-12l14-13l6-5M710 667l14-12l15-14l13-14l13-11l13-12l14-14l15-12l13-11l15-11l12-10l15-12l13-10l14-11l12-11l15-13l13-13l14-14l12-10l15-15l12-11M710 689l7-8l14-13l13-11l15-14l13-13l13-12l15-14l15-11l14-11l14-13l14-11l14-10l12-8l13-13l13-11l13-12l13-12l13-14l14-13l14-13l6-6M710 710l14-13l13-12l14-16l14-13l14-15l13-11l15-12l13-10l15-11l14-12l13-10l12-7l14-14l14-11l14-12l12-13l14-13l14-14l12-13l14-12M710 730l8-6l13-13l14-15l12-11l15-15l13-13l13-11l14-10l12-10l14-12l14-9l13-10l14-12l14-13l15-11l12-13l15-15l13-11l15-16l13-12l6-6M710 749l14-11l13-14l14-13l13-13l14-12l12-11l15-13l12-9l13-12l13-11l14-10l14-9l14-12l14-13l15-12l13-13l14-15l15-13l13-12l13-13M710 769l7-7l13-11l15-14l12-12l14-11l13-13l14-11l14-14l12-7l15-14l12-9l14-12l14-12l13-12l14-12l15-12l13-12l15-14l13-13l14-12l6-6M710 789l13-12l15-13l14-13l14-11l12-12l14-12l15-12l13-13l14-11l13-11l14-13l14-11l13-10l14-12l12-11l14-13l14-12l14-11l12-14l14-11M710 809l8-7l13-11l14-12l14-12l14-14l13-10l14-13l14-13l15-13l14-10l13-13l13-10l14-12l14-11l13-13l12-10l13-12l14-13l13-11l14-11l6-7M710 830l14-12l15-12l13-14l13-11l14-13l15-11l12-12l15-13l13-10l15-14l13-10l13-10l13-13l15-13l12-11l13-11l15-13l12-10l14-14l13-11M710 851l7-7l15-13l12-10l15-13l13-11l13-14l13-11l14-13l13-8l13-12l14-13l14-11l14-13l14-11l13-10l14-14l14-11l14-14l12-10l15-13l6-7M710 871l15-13l13-11l13-12l13-13l14-12l13-9l13-13l14-11l12-10l14-12l13-12l14-13l14-11l15-13l13-12l15-13l14-11l14-14l14-11l12-12M710 890l7-5l14-12l13-12l14-12l13-11l14-12l13-11l13-12l13-11l13-12l14-12l14-11l13-12l14-13l15-12l14-12l13-12l14-12l14-12l14-12l6-6M710 624l0 21l0 22l0 22l0 21l0 20l0 19l0 20l0 20l0 20l0 21l0 21l0 20l0 19M710 624l0 21l0 22l0 22l0 21l0 20l0 19l0 20l0 20l0 20l0 21l0 21l0 20l0 19M710 624l0 21l0 22l0 22l0 21l0 20l0 19l0 20l0 20l0 20l0 21l0 21l0 20l0 19M710 624l0 21l0 22l0 22l0 21l0 20l0 19l0 20l0 20l0 20l0 21l0 21l0 20l0 19M710 624l0 21l0 22l0 22l0 21l0 20l0 19l0 20l0 20l0 20l0 21l0 21l0 20l0 19M710 624l0 21l0 22l0 22l0 21l0 20l0 19l0 20l0 20l0 20l0 21l0 21l0 20l0 19M710 624l0 21l0 22l0 22l0 21l0 20l0 19l0 20l0 20l0 20l0 21l0 21l0 20l0 19M710 624l0 21l0 22l0 22l0 21l0 20l0 19l0 20l0 20l0 20l0 21l0 21l0 20l7 14M710 624l0 21l0 22l0 22l0 21l0 20l0 19l0 20l0 20l0 20l0 21l7 14l8 14l6 15M710 624l0 21l0 22l0 22l0 21l0 20l0 19l0 20l0 20l8 13l6 16l8 13l6 16l6 14M710 624l0 21l0 22l0 22l0 21l0 20l0 19l7 13l6 15l8 14l8 15l5 15l7 14l7 14M710 624l0 21l0 22l0 22l0 21l8 14l6 14l6 13l8 13l7 15l7 13l7 16l5 14l7 16M710 624l0 21l0 22l7 14l7 16l7 14l6 13l8 13l7 14l7 16l6 14l7 16l6 13l7 16M710 624l7 15l7 16l7 13l6 17l8 11l6 15l6 14l9 15l7 13l6 15l6 15l6 18l7 14M724 612l7 15l8 14l5 16l7 12l6 16l7 13l7 16l7 14l8 15l8 14l4 15l6 16l7 15M737 600l8 13l7 14l7 16l6 13l7 14l6 16l6 15l8 15l8 14l6 15l6 14l6 18l6 15M751 589l7 14l7 13l7 14l7 11l6 16l5 18l8 15l9 14l7 13l7 15l4 19l5 16l7 13M764 577l7 13l7 14l7 14l7 12l6 16l7 16l7 14l8 15l9 13l5 18l4 17l6 16l7 13M778 565l7 13l7 12l8 14l7 14l5 18l5 17l7 16l10 11l9 14l6 14l3 18l5 17l8 14M791 554l7 13l9 11l8 15l5 15l4 18l6 15l9 14l8 14l9 12l6 17l4 17l5 15l7 15M804 542l7 13l9 12l9 15l6 15l3 17l5 16l8 16l10 10l8 15l6 17l5 14l5 17l7 13M817 531l8 12l10 13l8 13l6 16l3 20l5 15l8 14l10 11l8 14l5 16l6 16l6 15l7 14M830 520l8 13l9 13l10 12l5 17l3 20l6 16l8 11l9 13l9 13l6 14l4 19l6 13l8 14M843 508l8 13l11 13l9 14l3 20l5 15l6 16l7 11l10 13l8 12l5 16l6 16l7 14l6 15M857 497l8 13l10 14l8 16l5 14l5 16l6 16l7 12l8 14l8 13l6 15l7 16l7 14l6 14M871 484l9 14l9 15l7 14l6 16l6 16l6 15l7 12l7 13l7 14l8 14l6 15l7 14l6 16M885 472l7 15l9 15l8 14l7 15l4 15l7 15l7 13l8 13l7 13l6 17l6 15l9 13l6 15M899 460l8 14l9 15l6 15l6 14l7 13l6 15l8 14l7 16l6 13l7 14l7 16l6 14l0 21M913 448l8 15l8 13l6 16l7 13l6 15l8 13l6 14l6 15l8 16l6 14l0 20l0 21l0 21M927 435l8 13l8 14l5 16l8 13l7 13l6 17l7 14l6 16l0 20l0 21l0 20l0 21l0 21M941 423l8 14l6 15l7 13l6 13l8 14l6 16l0 21l0 22l0 20l0 21l0 20l0 21l0 21M955 411l7 14l8 12l6 15l6 14l0 20l0 22l0 21l0 22l0 20l0 21l0 20l0 21l0 21M969 399l7 13l6 14l0 20l0 20l0 20l0 22l0 21l0 22l0 20l0 21l0 20l0 21l0 21M982 387l0 20l0 19l0 20l0 20l0 20l0 22l0 21l0 22l0 20l0 21l0 20l0 21l0 21M982 387l0 20l0 19l0 20l0 20l0 20l0 22l0 21l0 22l0 20l0 21l0 20l0 21l0 21M710 624l0 21l0 22l0 22l0 21l0 20l0 19l0 20l0 20l0 20l0 21l0 21l0 20l0 19M710 624l0 21l0 22l0 22l0 21l0 20l0 19l0 20l0 20l0 20l0 21l0 21l0 20l0 19M724 612l-7 27l-7 28l0 22l0 21l0 20l0 19l0 20l0 20l0 20l0 21l0 21l0 20l0 19M737 600l-6 27l-7 28l-7 26l-7 29l0 20l0 19l0 20l0 20l0 20l0 21l0 21l0 20l0 19M751 589l-6 24l-6 28l-8 27l-7 29l-6 27l-8 25l0 20l0 20l0 20l0 21l0 21l0 20l0 19M764 577l-6 26l-6 24l-8 30l-7 28l-6 26l-7 27l-7 24l-7 27l0 20l0 21l0 21l0 20l0 19M778 565l-7 25l-6 26l-6 27l-8 26l-6 27l-8 28l-7 27l-7 26l-5 25l-8 28l0 21l0 20l0 19M791 554l-6 24l-7 26l-6 26l-7 26l-8 29l-6 26l-6 26l-7 27l-7 27l-7 27l-7 26l-7 27l0 19M804 542l-6 25l-6 23l-7 28l-6 23l-7 29l-8 28l-7 27l-5 26l-7 28l-6 27l-7 25l-7 27l-8 27M817 531l-6 24l-4 23l-7 26l-8 26l-7 27l-7 29l-7 28l-5 26l-7 27l-7 25l-8 29l-6 26l-7 26M830 520l-5 23l-5 24l-5 26l-8 25l-9 28l-8 29l-6 26l-6 27l-5 25l-8 28l-6 27l-8 27l-7 26M843 508l-5 25l-3 23l-6 26l-9 26l-8 28l-7 26l-7 28l-6 26l-6 27l-7 25l-7 29l-8 25l-6 27M857 497l-6 24l-4 25l-4 23l-8 28l-11 29l-7 27l-5 23l-5 28l-7 26l-6 27l-9 26l-7 27l-7 28M871 484l-6 26l-3 24l-5 24l-8 27l-11 29l-8 27l-6 28l-4 22l-6 26l-8 28l-8 27l-7 29l-6 25M885 472l-5 26l-5 26l-4 24l-9 27l-10 30l-9 25l-4 25l-5 25l-5 24l-8 28l-9 27l-8 29l-6 27M899 460l-7 27l-3 26l-6 27l-9 28l-9 27l-8 25l-6 26l-4 23l-4 25l-9 28l-9 29l-7 26l-7 26M913 448l-6 26l-6 28l-5 25l-8 27l-9 29l-8 28l-6 23l-4 22l-5 25l-7 27l-11 31l-8 28l-6 25M927 435l-6 28l-5 26l-7 27l-7 27l-9 27l-8 29l-6 23l-4 23l-6 26l-7 27l-10 28l-8 29l-7 25M941 423l-6 25l-6 28l-7 28l-6 27l-8 28l-9 27l-7 24l-4 25l-5 24l-8 29l-9 27l-9 28l-6 25M955 411l-6 26l-6 25l-8 30l-7 26l-8 28l-6 28l-8 24l-4 25l-5 25l-9 27l-8 27l-9 28l-6 27M969 399l-7 26l-7 27l-7 26l-6 27l-7 26l-8 30l-6 25l-7 26l-4 23l-7 27l-9 29l-9 28l-7 26M982 387l-6 25l-6 25l-8 28l-6 26l-8 29l-7 26l-7 28l-6 25l-6 26l-7 26l-8 30l-7 25l-8 26M982 387l0 20l0 19l-6 26l-8 26l-5 26l-7 29l-7 27l-7 27l-7 26l-7 27l-7 27l-8 27l-6 26M982 387l0 20l0 19l0 20l0 20l-6 26l-7 29l-7 26l-6 29l-7 24l-6 27l-8 29l-7 25l-7 27M982 387l0 20l0 19l0 20l0 20l0 20l0 22l-6 27l-8 27l-6 27l-7 28l-6 25l-7 28l-8 26M982 387l0 20l0 19l0 20l0 20l0 20l0 22l0 21l0 22l-6 27l-7 25l-8 29l-5 24l-8 28M982 387l0 20l0 19l0 20l0 20l0 20l0 22l0 21l0 22l0 20l0 21l-6 27l-6 26l-8 27M982 387l0 20l0 19l0 20l0 20l0 20l0 22l0 21l0 22l0 20l0 21l0 20l0 21l-6 27M982 387l0 20l0 19l0 20l0 20l0 20l0 22l0 21l0 22l0 20l0 21l0 20l0 21l0 21M982 387l0 20l0 19l0 20l0 20l0 20l0 22l0 21l0 22l0 20l0 21l0 20l0 21l0 21M982 387l0 20l0 19l0 20l0 20l0 20l0 22l0 21l0 22l0 20l0 21l0 20l0 21l0 21M982 387l0 20l0 19l0 20l0 20l0 20l0 22l0 21l0 22l0 20l0 21l0 20l0 21l0 21M982 387l0 20l0 19l0 20l0 20l0 20l0 22l0 21l0 22l0 20l0 21l0 20l0 21l0 21M982 387l0 20l0 19l0 20l0 20l0 20l0 22l0 21l0 22l0 20l0 21l0 20l0 21l0 21M982 387l0 20l0 19l0 20l0 20l0 20l0 22l0 21l0 22l0 20l0 21l0 20l0 21l0 21M982 387l0 20l0 19l0 20l0 20l0 20l0 22l0 21l0 22l0 20l0 21l0 20l0 21l0 21"/><path d="M239.5 487.8L511.5 251.5L982.5 387.40000000000003L982.5 654.2L710.5 890.5L239.5 754.2ZM239.5 487.8L710.5 623.7L982.5 387.40000000000003M710.5 623.7L710.5 890.5"/></g></svg><div class="r" style="left:292px;top:706px;width:23px;height:17px;background:#fffff4;border:1px solid #000;box-sizing:border-box;"></div><div class="t" style="left:296.00px;top:710.00px;font-size:11px;color:#000;letter-spacing:-0.097px;">0,0</div><svg class="r" style="left:7.100000000000001px;top:204.4px;" width="16.4" height="16.4" viewBox="0 0 16.4 16.4"><defs><radialGradient id="cg" cx="50%" cy="35%" r="65%"><stop offset="0" stop-color="#8fe36a"/><stop offset="1" stop-color="#4fc034"/></radialGradient></defs><circle cx="8.2" cy="8.2" r="7.2" fill="url(#cg)" stroke="#6ccf4c" stroke-width="0.7"/><path d="M4.299999999999999 8.5L6.999999999999999 11.299999999999999L12.1 5.299999999999999" fill="none" stroke="#fff" stroke-width="1.9" stroke-linecap="round" stroke-linejoin="round"/></svg><div class="t" style="left:28.30px;top:208.00px;font-size:12.5px;color:#111;font-weight:bold;letter-spacing:-1.166px;">ULS:</div><div class="t" style="left:8.00px;top:224.00px;font-size:12px;color:#111;letter-spacing:-0.149px;">Concrete</div><div class="t" style="left:94.80px;top:224.00px;font-size:12px;color:#111;letter-spacing:-0.920px;">C1</div><svg class="r" style="left:118.3px;top:220.8px;" width="16.4" height="16.4" viewBox="0 0 16.4 16.4"><defs><radialGradient id="cg" cx="50%" cy="35%" r="65%"><stop offset="0" stop-color="#8fe36a"/><stop offset="1" stop-color="#4fc034"/></radialGradient></defs><circle cx="8.2" cy="8.2" r="7.2" fill="url(#cg)" stroke="#6ccf4c" stroke-width="0.7"/><path d="M4.299999999999999 8.5L6.999999999999999 11.299999999999999L12.1 5.299999999999999" fill="none" stroke="#fff" stroke-width="1.9" stroke-linecap="round" stroke-linejoin="round"/></svg><div class="t" style="left:144.00px;top:224.00px;font-size:12px;color:#111;letter-spacing:-0.505px;">93,7%</div><div class="t" style="left:8.00px;top:245.00px;font-size:12px;color:#111;letter-spacing:-0.080px;">Reinforcement</div><div class="t" style="left:94.80px;top:245.00px;font-size:12px;color:#111;letter-spacing:-0.920px;">C1</div><svg class="r" style="left:118.3px;top:241.8px;" width="16.4" height="16.4" viewBox="0 0 16.4 16.4"><defs><radialGradient id="cg" cx="50%" cy="35%" r="65%"><stop offset="0" stop-color="#8fe36a"/><stop offset="1" stop-color="#4fc034"/></radialGradient></defs><circle cx="8.2" cy="8.2" r="7.2" fill="url(#cg)" stroke="#6ccf4c" stroke-width="0.7"/><path d="M4.299999999999999 8.5L6.999999999999999 11.299999999999999L12.1 5.299999999999999" fill="none" stroke="#fff" stroke-width="1.9" stroke-linecap="round" stroke-linejoin="round"/></svg><div class="t" style="left:144.00px;top:245.00px;font-size:12px;color:#111;letter-spacing:-0.505px;">49,1%</div><div class="t" style="left:8.00px;top:266.00px;font-size:12px;color:#111;letter-spacing:-0.060px;">Anchorage</div><div class="t" style="left:94.80px;top:266.00px;font-size:12px;color:#111;letter-spacing:-0.920px;">C1</div><svg class="r" style="left:118.3px;top:262.8px;" width="16.4" height="16.4" viewBox="0 0 16.4 16.4"><defs><radialGradient id="cg" cx="50%" cy="35%" r="65%"><stop offset="0" stop-color="#8fe36a"/><stop offset="1" stop-color="#4fc034"/></radialGradient></defs><circle cx="8.2" cy="8.2" r="7.2" fill="url(#cg)" stroke="#6ccf4c" stroke-width="0.7"/><path d="M4.299999999999999 8.5L6.999999999999999 11.299999999999999L12.1 5.299999999999999" fill="none" stroke="#fff" stroke-width="1.9" stroke-linecap="round" stroke-linejoin="round"/></svg><div class="t" style="left:144.00px;top:266.00px;font-size:12px;color:#111;letter-spacing:-0.505px;">99,8%</div><div class="t" style="left:58.00px;top:514.00px;font-size:18.5px;color:#111;letter-spacing:0.023px;">σc,eq</div><div class="t" style="left:75.00px;top:538.00px;font-size:11px;color:#111;letter-spacing:0.154px;">[MPa]</div><div class="r" style="left:75px;top:577.50px;width:30px;height:25.12px;background:#cde000;"></div><div class="r" style="left:75px;top:602.12px;width:30px;height:25.12px;background:#ffff00;"></div><div class="r" style="left:75px;top:626.75px;width:30px;height:25.12px;background:#ffe100;"></div><div class="r" style="left:75px;top:651.38px;width:30px;height:25.12px;background:#ffc800;"></div><div class="r" style="left:75px;top:676.00px;width:30px;height:25.12px;background:#ffaa00;"></div><div class="r" style="left:75px;top:700.62px;width:30px;height:25.12px;background:#ff7d00;"></div><div class="r" style="left:75px;top:725.25px;width:30px;height:25.12px;background:#ff5000;"></div><div class="r" style="left:75px;top:749.88px;width:30px;height:25.12px;background:#ff1e00;"></div><div class="r" style="left:75px;top:774.50px;width:30px;height:25.12px;background:#f00000;"></div><div class="r" style="left:75px;top:799.12px;width:30px;height:25.12px;background:#cd0000;"></div><div class="r" style="left:75px;top:823.75px;width:30px;height:25.12px;background:#aa0000;"></div><div class="r" style="left:75px;top:848.38px;width:30px;height:25.12px;background:#870000;"></div><div class="r" style="left:75px;top:577px;width:30px;height:296.5px;border:1px solid #000;box-sizing:border-box;"></div><div class="t" style="left:50.51px;top:573.00px;font-size:11px;color:#111;">0,0</div><div class="t" style="left:46.85px;top:597.00px;font-size:11px;color:#111;">-1,3</div><div class="t" style="left:46.85px;top:622.00px;font-size:11px;color:#111;">-2,6</div><div class="t" style="left:46.85px;top:646.00px;font-size:11px;color:#111;">-3,9</div><div class="t" style="left:46.85px;top:671.00px;font-size:11px;color:#111;">-5,2</div><div class="t" style="left:46.85px;top:696.00px;font-size:11px;color:#111;">-6,5</div><div class="t" style="left:46.85px;top:720.00px;font-size:11px;color:#111;">-7,8</div><div class="t" style="left:46.85px;top:745.00px;font-size:11px;color:#111;">-9,1</div><div class="t" style="left:40.73px;top:770.00px;font-size:11px;color:#111;">-10,4</div><div class="t" style="left:41.54px;top:794.00px;font-size:11px;color:#111;">-11,7</div><div class="t" style="left:40.73px;top:819.00px;font-size:11px;color:#111;">-13,0</div><div class="t" style="left:40.73px;top:843.00px;font-size:11px;color:#111;">-14,3</div><div class="t" style="left:40.73px;top:868.00px;font-size:11px;color:#111;">-15,6</div><svg class="r" style="left:35px;top:905px;" width="50" height="60" viewBox="0 0 50 60"><path d="M9.8 47V28" stroke="#1010ff" stroke-width="3.9"/><path d="M4.9 28.9L9.8 13.2L14.7 28.9Z" fill="#1010ff"/><path d="M9.4 47L21.5 37.3" stroke="#0f8a0f" stroke-width="3.6"/><path d="M24 41.3L18 34.1L29.7 30.1Z" fill="#0f8a0f"/><path d="M9.4 47L29 52.4" stroke="#ff1414" stroke-width="3.6"/><path d="M27.3 57L29.9 47.6L43.2 56.4Z" fill="#ff1414"/><circle cx="9.4" cy="47" r="4.3" fill="#777"/><circle cx="8.3" cy="45.7" r="1.7" fill="#b5b5b5"/></svg><div class="t" style="left:46.40px;top:907.00px;font-size:11.7px;color:#111;">Z</div><div class="t" style="left:64.40px;top:923.00px;font-size:11.7px;color:#111;">Y</div><div class="t" style="left:78.40px;top:949.00px;font-size:11.7px;color:#111;">X</div><svg class="r" style="left:1066px;top:295px;" width="8" height="8" viewBox="0 0 8 8"><path d="M7.2 0.8V7.2H0.8Z" fill="#444"/></svg><div class="r" style="left:1081px;top:288px;width:129px;height:21px;background:#f26c21;"></div><div class="t" style="left:1086.20px;top:292.00px;font-size:12px;color:#fff;font-weight:bold;letter-spacing:-0.271px;">ULS Combinations</div><div class="t" style="left:1085.30px;top:314.00px;font-size:12px;color:#333;letter-spacing:-0.920px;">C1</div><div class="r" style="left:1012px;top:333.5px;width:122px;height:2.5px;background:#e4e4e4;"></div><div class="r" style="left:1134px;top:333px;width:1px;height:4px;background:#000;"></div><div class="r" style="left:1157px;top:333.5px;width:6px;height:3px;background:#d8d8d8;"></div><div class="r" style="left:1173px;top:333.5px;width:2px;height:3px;background:#d0d0d0;"></div><div class="r" style="left:1158px;top:851px;width:4px;height:3px;background:#d8d8d8;"></div><div class="r" style="left:1092px;top:160px;width:27px;height:26px;background:#dcdcdc;"></div><div class="r" style="left:1089px;top:162px;width:1px;height:22px;background:#c8c8c8;"></div><div class="r" style="left:1146px;top:162px;width:1px;height:22px;background:#c8c8c8;"></div><svg class="r" style="left:1006px;top:163px;" width="20" height="20" viewBox="0 0 20 20"><path d="M5 2V14.4H17.6M2.4 5H14.5V17.6" fill="none" stroke="#333" stroke-width="1.4" /></svg><svg class="r" style="left:1031px;top:168px;" width="10" height="8" viewBox="0 0 10 8"><path d="M1.5 2.2L5 5.6L8.5 2.2" fill="none" stroke="#444" stroke-width="1.2" /></svg><svg class="r" style="left:1049px;top:163px;" width="22" height="20" viewBox="0 0 22 20"><path d="M3.2 4.5H8.4M8.4 2.3C4.2 6.5 2.6 12.5 6.4 17.2M13.4 6.6C14 3.4 15.4 2.3 16.4 2.3C19.2 2.6 19 8 12.6 15.2M12.4 10.6V15.4H17.4" fill="none" stroke="#333" stroke-width="1.3" /></svg><svg class="r" style="left:1076px;top:168px;" width="10" height="8" viewBox="0 0 10 8"><path d="M1.5 2.2L5 5.6L8.5 2.2" fill="none" stroke="#444" stroke-width="1.2" /></svg><svg class="r" style="left:1096px;top:163px;" width="20" height="20" viewBox="0 0 20 20"><path d="M2.6 6H12.5V17.2H2.6ZM2.6 6L7.7 2.4H17.7L12.5 6M17.7 2.4V13L12.5 17.2M9.5 8.4V13H17.7M9.5 13L2.6 17.2" fill="none" stroke="#222" stroke-width="1.25" /></svg><svg class="r" style="left:1123px;top:163px;" width="20" height="20" viewBox="0 0 20 20"><path d="M2 6.4H13V18H2Z" fill="#000"/><path d="M2.6 5.4L6.4 1.8H18L14 5.4Z" fill="#000"/><path d="M14 6.4L18.4 2.6V13.6L14 17.6Z" fill="#000"/></svg><svg class="r" style="left:1152px;top:164px;" width="20" height="18" viewBox="0 0 20 18"><path d="M1.6 4.4L11.4 2L18.4 3.4L18.2 10.4L6.4 15.4L1.8 10.8ZM1.6 4.4L6.2 7.4L18.4 3.4M6.2 7.4L6.4 15.4" fill="none" stroke="#222" stroke-width="1.2" /></svg><svg class="r" style="left:1179px;top:164px;" width="19" height="18" viewBox="0 0 19 18"><path d="M1.4 9.4L9.6 1.8L17.6 9.4M3.8 7.6V16H7.6V11H11.4V16H15.2V7.6" fill="none" stroke="#6a6a6a" stroke-width="1.15" /></svg><svg class="r" style="left:1205px;top:163px;" width="20" height="20" viewBox="0 0 20 20"><path d="M2.4 7V2.4H7M2.4 2.4L7.2 7.2M13 2.4H17.6V7M17.6 2.4L12.8 7.2M2.4 13V17.6H7M2.4 17.6L7.2 12.8M17.6 13V17.6H13M17.6 17.6L12.8 12.8" fill="none" stroke="#111" stroke-width="1.5" /></svg><div class="r" style="left:1002px;top:186px;width:150px;height:41px;background:#fff;border:1px solid #bdbdbd;box-sizing:border-box;border-top-color:#d9d9d9;"></div><div class="r" style="left:1008px;top:196px;width:138px;height:1px;background:#bdbdbd;"></div><svg class="r" style="left:1010px;top:204px;" width="12" height="12" viewBox="0 0 12 12"><path d="M6 1V11M1 6H11" stroke="#333" stroke-width="1.9"/></svg><div class="t" style="left:1028.60px;top:205.00px;font-size:12px;color:#444;letter-spacing:-0.169px;">New</div><svg class="r" style="left:1137px;top:188px;" width="84" height="70" viewBox="0 0 84 70"><ellipse cx="37" cy="46" rx="38" ry="20" fill="#e1e1e1"/><ellipse cx="36.8" cy="45.6" rx="29" ry="14.2" fill="#fff"/><path d="M12.3 12.6L31.2 2.1L61.4 8.3L58.8 37.7L43.9 56.3L13.7 43.9Z" fill="#b2b2b2"/><path d="M12.3 12.6L31.2 2.1L61.4 8.3L45 22.1Z" fill="#b6b6b6"/><path d="M12.3 12.6L31.2 2.1L61.4 8.3L58.8 37.7L43.9 56.3L13.7 43.9ZM12.3 12.6L45 22.1L43.9 56.3M45 22.1L61.4 8.3M31.2 2.1L31.5 29.7L13.7 43.9M31.5 29.7L58.8 37.7" fill="none" stroke="#858585" stroke-width="0.9" stroke-linejoin="round"/><path d="M36 12l3.6-1.8M53.6 28.6l-0.6 5.2l-1.4 0.8M24.3 35.4l2.6-1.2M25.2 33.6l0.9 2.6M28.4 33.4l1.6 2.8l1.8-3M30 36.2l0.3 3.4" stroke="#f6f6f6" stroke-width="1.2" fill="none"/><path d="M65.8 50.2l10.6 3.2" stroke="#8a8a8a" stroke-width="0.9" stroke-dasharray="2.2 1.3"/></svg><svg class="r" style="left:1143px;top:242px;" width="20" height="16" viewBox="0 0 20 16"><path d="M2.5 12.5L8.4 5.6M8.4 5.6L7.6 2.4M8.4 5.6L14.8 4.6" stroke="#8c8c8c" stroke-width="2" fill="none"/></svg><div class="r" style="left:1229px;top:160px;width:1px;height:840px;background:#bdbdbd;"></div><div class="r" style="left:1230px;top:160px;width:4px;height:840px;background:#cdcdcd;"></div><div class="r" style="left:1234px;top:160px;width:1px;height:840px;background:#c4cacf;"></div><div class="r" style="left:1235px;top:160px;width:683px;height:840px;background:#fff;"></div><div class="r" style="left:1235px;top:160px;width:683px;height:27px;background:#f26c21;"></div><div class="r" style="left:1240px;top:164px;width:74px;height:23px;background:#f0f0f0;"></div><div class="t" style="left:1253.00px;top:170.00px;font-size:12px;color:#f26c21;letter-spacing:-0.086px;">Concrete</div><div class="t" style="left:1327.00px;top:170.00px;font-size:12px;color:#fff;letter-spacing:-0.003px;">Reinforcement</div><div class="t" style="left:1245.40px;top:199.00px;font-size:12.5px;color:#333;font-weight:bold;letter-spacing:-0.474px;">Extreme ULS: C1 (G100,0%)</div><div class="t" style="left:1245.20px;top:227.00px;font-size:12px;color:#333;letter-spacing:-0.016px;">Load increment</div><div class="r" style="left:1395px;top:222px;width:515px;height:20.5px;background:#e6e6e6;"></div><div class="t" style="left:1401.30px;top:227.00px;font-size:12px;color:#222;letter-spacing:-0.619px;">G100,0%, V100,0%</div><svg class="r" style="left:1897px;top:229px;" width="9" height="7" viewBox="0 0 9 7"><path d="M0.8 1H8L4.4 5.6Z" fill="#111"/></svg><div class="r" style="left:1245px;top:253px;width:660px;height:151px;background:#fff;"></div><div class="r" style="left:1245px;top:253px;width:660px;height:33px;background:#f0f0f0;"></div><div class="r" style="left:1245px;top:286px;width:660px;height:29px;background:#e4e4e4;"></div><div class="r" style="left:1325.0px;top:253px;width:1px;height:150px;background:#a9a9a9;"></div><div class="r" style="left:1375.0px;top:253px;width:1px;height:150px;background:#a9a9a9;"></div><div class="r" style="left:1425.0px;top:253px;width:1px;height:150px;background:#a9a9a9;"></div><div class="r" style="left:1475.0px;top:253px;width:1px;height:150px;background:#a9a9a9;"></div><div class="r" style="left:1552.0px;top:253px;width:1px;height:150px;background:#a9a9a9;"></div><div class="r" style="left:1613.0px;top:253px;width:1px;height:150px;background:#a9a9a9;"></div><div class="r" style="left:1678.0px;top:253px;width:1px;height:150px;background:#a9a9a9;"></div><div class="r" style="left:1767.0px;top:253px;width:1px;height:150px;background:#a9a9a9;"></div><div class="r" style="left:1868.0px;top:253px;width:1px;height:150px;background:#a9a9a9;"></div><div class="r" style="left:1245px;top:286px;width:659px;height:1px;background:#a9a9a9;"></div><div class="r" style="left:1245px;top:315px;width:659px;height:1px;background:#a9a9a9;"></div><div class="r" style="left:1245px;top:344px;width:659px;height:1px;background:#a9a9a9;"></div><div class="r" style="left:1245px;top:373px;width:659px;height:1px;background:#a9a9a9;"></div><div class="r" style="left:1245px;top:253px;width:660px;height:151px;border:2px solid #a4a4a4;box-sizing:border-box;border-top-width:1px;"></div><div class="t" style="left:1249.80px;top:265.00px;font-size:12px;color:#333;font-weight:bold;letter-spacing:0.081px;">Member</div><div class="t" style="left:1330.30px;top:265.00px;font-size:12px;color:#333;font-weight:bold;letter-spacing:-0.100px;">X [m]</div><div class="t" style="left:1380.30px;top:265.00px;font-size:12px;color:#333;font-weight:bold;letter-spacing:-0.157px;">Y [m]</div><div class="t" style="left:1430.30px;top:265.00px;font-size:12px;color:#333;font-weight:bold;letter-spacing:-0.065px;">Z [m]</div><div class="t" style="left:1480.30px;top:265.00px;font-size:12px;color:#333;font-weight:bold;letter-spacing:-0.338px;">σc,eq [MPa]</div><div class="t" style="left:1557.30px;top:265.00px;font-size:12px;color:#333;font-weight:bold;letter-spacing:0.087px;">εc [1e-4]</div><div class="t" style="left:1618.30px;top:265.00px;font-size:12px;color:#333;font-weight:bold;letter-spacing:0.080px;">εpl [1e-4]</div><div class="t" style="left:1683.30px;top:265.00px;font-size:12px;color:#333;font-weight:bold;letter-spacing:-0.173px;">σc,3/σc,lim [-]</div><div class="t" style="left:1772.30px;top:265.00px;font-size:12px;color:#333;font-weight:bold;letter-spacing:-0.288px;">σc,eq/σc,lim [%]</div><div class="t" style="left:1249.70px;top:296.00px;font-size:12px;color:#333;letter-spacing:-0.529px;">SB1</div><div class="t" style="left:1330.20px;top:296.00px;font-size:12px;color:#333;letter-spacing:-0.409px;">0,95</div><div class="t" style="left:1380.20px;top:296.00px;font-size:12px;color:#333;letter-spacing:-0.409px;">0,96</div><div class="t" style="left:1430.20px;top:296.00px;font-size:12px;color:#333;letter-spacing:-0.409px;">0,34</div><div class="t" style="left:1480.20px;top:296.00px;font-size:12px;color:#333;letter-spacing:-0.383px;">-15,6</div><div class="t" style="left:1557.20px;top:296.00px;font-size:12px;color:#333;letter-spacing:-0.389px;">1,2</div><div class="t" style="left:1618.20px;top:296.00px;font-size:12px;color:#333;letter-spacing:-0.362px;">-6,3</div><div class="t" style="left:1683.20px;top:296.00px;font-size:12px;color:#333;letter-spacing:-0.409px;">1,00</div><div class="t" style="left:1772.20px;top:296.00px;font-size:12px;color:#333;letter-spacing:-0.409px;">93,7</div><svg class="r" style="left:1878.3px;top:293.2px;" width="16.4" height="16.4" viewBox="0 0 16.4 16.4"><defs><radialGradient id="cg" cx="50%" cy="35%" r="65%"><stop offset="0" stop-color="#8fe36a"/><stop offset="1" stop-color="#4fc034"/></radialGradient></defs><circle cx="8.2" cy="8.2" r="7.2" fill="url(#cg)" stroke="#6ccf4c" stroke-width="0.7"/><path d="M4.299999999999999 8.5L6.999999999999999 11.299999999999999L12.1 5.299999999999999" fill="none" stroke="#fff" stroke-width="1.9" stroke-linecap="round" stroke-linejoin="round"/></svg><div class="t" style="left:1249.70px;top:325.00px;font-size:12px;color:#333;letter-spacing:-0.529px;">SB1</div><div class="t" style="left:1330.20px;top:325.00px;font-size:12px;color:#333;letter-spacing:-0.409px;">0,95</div><div class="t" style="left:1380.20px;top:325.00px;font-size:12px;color:#333;letter-spacing:-0.409px;">0,96</div><div class="t" style="left:1430.20px;top:325.00px;font-size:12px;color:#333;letter-spacing:-0.409px;">0,34</div><div class="t" style="left:1480.20px;top:325.00px;font-size:12px;color:#333;letter-spacing:-0.370px;">-11,8</div><div class="t" style="left:1557.20px;top:325.00px;font-size:12px;color:#333;letter-spacing:-0.362px;">-4,4</div><div class="t" style="left:1618.20px;top:325.00px;font-size:12px;color:#333;letter-spacing:-0.362px;">-2,4</div><div class="t" style="left:1683.20px;top:325.00px;font-size:12px;color:#333;letter-spacing:-0.409px;">1,00</div><div class="t" style="left:1772.20px;top:325.00px;font-size:12px;color:#333;letter-spacing:-0.409px;">71,1</div><svg class="r" style="left:1878.3px;top:322.2px;" width="16.4" height="16.4" viewBox="0 0 16.4 16.4"><defs><radialGradient id="cg" cx="50%" cy="35%" r="65%"><stop offset="0" stop-color="#8fe36a"/><stop offset="1" stop-color="#4fc034"/></radialGradient></defs><circle cx="8.2" cy="8.2" r="7.2" fill="url(#cg)" stroke="#6ccf4c" stroke-width="0.7"/><path d="M4.299999999999999 8.5L6.999999999999999 11.299999999999999L12.1 5.299999999999999" fill="none" stroke="#fff" stroke-width="1.9" stroke-linecap="round" stroke-linejoin="round"/></svg><div class="t" style="left:1249.70px;top:354.00px;font-size:12px;color:#333;letter-spacing:-0.529px;">SB1</div><div class="t" style="left:1330.20px;top:354.00px;font-size:12px;color:#333;letter-spacing:-0.409px;">0,95</div><div class="t" style="left:1380.20px;top:354.00px;font-size:12px;color:#333;letter-spacing:-0.409px;">0,96</div><div class="t" style="left:1430.20px;top:354.00px;font-size:12px;color:#333;letter-spacing:-0.409px;">0,34</div><div class="t" style="left:1480.20px;top:354.00px;font-size:12px;color:#333;letter-spacing:-0.362px;">-0,5</div><div class="t" style="left:1557.20px;top:354.00px;font-size:12px;color:#333;letter-spacing:-0.389px;">0,3</div><div class="t" style="left:1618.20px;top:354.00px;font-size:12px;color:#333;letter-spacing:-0.389px;">0,0</div><div class="t" style="left:1683.20px;top:354.00px;font-size:12px;color:#333;letter-spacing:-0.409px;">1,00</div><div class="t" style="left:1772.20px;top:354.00px;font-size:12px;color:#333;letter-spacing:-0.389px;">3,0</div><svg class="r" style="left:1878.3px;top:351.2px;" width="16.4" height="16.4" viewBox="0 0 16.4 16.4"><defs><radialGradient id="cg" cx="50%" cy="35%" r="65%"><stop offset="0" stop-color="#8fe36a"/><stop offset="1" stop-color="#4fc034"/></radialGradient></defs><circle cx="8.2" cy="8.2" r="7.2" fill="url(#cg)" stroke="#6ccf4c" stroke-width="0.7"/><path d="M4.299999999999999 8.5L6.999999999999999 11.299999999999999L12.1 5.299999999999999" fill="none" stroke="#fff" stroke-width="1.9" stroke-linecap="round" stroke-linejoin="round"/></svg><div class="t" style="left:1249.70px;top:383.00px;font-size:12px;color:#333;letter-spacing:-0.529px;">SB1</div><div class="t" style="left:1330.20px;top:383.00px;font-size:12px;color:#333;letter-spacing:-0.409px;">0,95</div><div class="t" style="left:1380.20px;top:383.00px;font-size:12px;color:#333;letter-spacing:-0.409px;">0,96</div><div class="t" style="left:1430.20px;top:383.00px;font-size:12px;color:#333;letter-spacing:-0.409px;">0,34</div><div class="t" style="left:1480.20px;top:383.00px;font-size:12px;color:#333;letter-spacing:-0.389px;">0,0</div><div class="t" style="left:1557.20px;top:383.00px;font-size:12px;color:#333;letter-spacing:-0.389px;">8,4</div><div class="t" style="left:1618.20px;top:383.00px;font-size:12px;color:#333;letter-spacing:-0.389px;">0,0</div><div class="t" style="left:1683.20px;top:383.00px;font-size:12px;color:#333;letter-spacing:-0.409px;">1,00</div><div class="t" style="left:1772.20px;top:383.00px;font-size:12px;color:#333;letter-spacing:-0.389px;">0,0</div><svg class="r" style="left:1878.3px;top:380.2px;" width="16.4" height="16.4" viewBox="0 0 16.4 16.4"><defs><radialGradient id="cg" cx="50%" cy="35%" r="65%"><stop offset="0" stop-color="#8fe36a"/><stop offset="1" stop-color="#4fc034"/></radialGradient></defs><circle cx="8.2" cy="8.2" r="7.2" fill="url(#cg)" stroke="#6ccf4c" stroke-width="0.7"/><path d="M4.299999999999999 8.5L6.999999999999999 11.299999999999999L12.1 5.299999999999999" fill="none" stroke="#fff" stroke-width="1.9" stroke-linecap="round" stroke-linejoin="round"/></svg><div class="r" style="left:1247px;top:579px;width:661px;height:1px;background:#d9d9d9;"></div><div class="r" style="left:0px;top:63px;width:1918px;height:96px;background:#fff;"></div><div class="r" style="left:0px;top:159px;width:1918px;height:1px;background:#c6c6c6;"></div><div class="r" style="left:148px;top:65px;width:1px;height:92px;background:#b9b9b9;"></div><div class="r" style="left:273px;top:65px;width:1px;height:92px;background:#b9b9b9;"></div><div class="r" style="left:394px;top:65px;width:1px;height:92px;background:#b9b9b9;"></div><div class="r" style="left:516px;top:65px;width:1px;height:92px;background:#b9b9b9;"></div><div class="r" style="left:606px;top:65px;width:1px;height:92px;background:#b9b9b9;"></div><div class="r" style="left:716px;top:65px;width:1px;height:92px;background:#b9b9b9;"></div><div class="r" style="left:1091px;top:65px;width:1px;height:92px;background:#b9b9b9;"></div><div class="r" style="left:1456px;top:65px;width:1px;height:92px;background:#b9b9b9;"></div><div class="r" style="left:779px;top:70px;width:47px;height:70px;background:#e0e0e0;"></div><div class="r" style="left:1140px;top:70px;width:34px;height:70px;background:#e0e0e0;"></div><div class="r" style="left:5px;top:69px;width:59px;height:30px;background:#f26c21;"></div><div class="t" style="left:11.50px;top:78.00px;font-size:13px;color:#fff;letter-spacing:-1.334px;">DRM1</div><svg class="r" style="left:53px;top:82.5px;" width="8" height="5" viewBox="0 0 8 5"><path d="M0.8 0.8H6.2L3.5 3.6Z" fill="#fff"/></svg><svg class="r" style="left:72px;top:71.5px;" width="34" height="34" viewBox="0 0 34 34"><path d="M13.5 6.1H8.5L1.2 13.3V31.7H23.6V16.5" fill="none" stroke="#1a1a1a" stroke-width="1.25" /><path d="M8.5 6.1V13.3H1.2" fill="none" stroke="#1a1a1a" stroke-width="1.25" /><path d="M23.6 1V11.2M18.5 6.1H28.7" fill="none" stroke="#f26c21" stroke-width="1.1" /></svg><svg class="r" style="left:111px;top:71.5px;" width="34" height="34" viewBox="0 0 34 34"><path d="M7.8 6.1H22.4V31.2H0.8V13.3Z" fill="none" stroke="#1a1a1a" stroke-width="1.25" /><path d="M7.8 6.1V13.3H0.8" fill="none" stroke="#1a1a1a" stroke-width="1.1" /><path d="M1.5 13V30.5" stroke="#777" stroke-width="1.6"/><path d="M13 1.2H27.4V27" fill="none" stroke="#f26c21" stroke-width="1.1" /></svg><svg class="r" style="left:158px;top:71.5px;" width="34" height="34" viewBox="0 0 34 34"><path d="M1 6.1H19.4A12.8 12.8 0 0 1 19.4 31.7H1" fill="none" stroke="#1a1a1a" stroke-width="1.25" /><path d="M5.6 1.5L1 6.1L5.6 10.7" fill="none" stroke="#1a1a1a" stroke-width="1.25" /></svg><svg class="r" style="left:196px;top:71.5px;" width="34" height="34" viewBox="0 0 34 34"><path d="M31.6 6.1H13.2A12.8 12.8 0 0 0 13.2 31.7H31.6" fill="none" stroke="#cfcfcf" stroke-width="1.25" /><path d="M27 1.5L31.6 6.1L27 10.7" fill="none" stroke="#cfcfcf" stroke-width="1.25" /></svg><svg class="r" style="left:234px;top:71.5px;" width="34" height="34" viewBox="0 0 34 34"><path d="M0.8 26V31.5H31.6V26" fill="none" stroke="#1a1a1a" stroke-width="1.25" /><path d="M16.4 1V24.5M11.9 20L16.4 24.5L20.9 20" fill="none" stroke="#f26c21" stroke-width="1.1" /></svg><svg class="r" style="left:289px;top:71.5px;" width="34" height="34" viewBox="0 0 34 34"><path d="M0.8 29.2L11.2 1.8H21L31.6 29.2H23.4L21.2 23.4H11L8.9 29.2Z" fill="none" stroke="#1a1a1a" stroke-width="1.3" /><path d="M12.4 18.1L16 8.3L19.7 18.1Z" fill="none" stroke="#1a1a1a" stroke-width="1.3" /></svg><svg class="r" style="left:344px;top:71.5px;" width="34" height="34" viewBox="0 0 34 34"><path d="M0.6 5.5V27M31.6 5.5V27M1 10.5H31M5.2 6.3L1 10.5L5.2 14.7M27 6.3L31.2 10.5L27 14.7" fill="none" stroke="#cfcfcf" stroke-width="1.1" /></svg><svg class="r" style="left:409px;top:71px;" width="34" height="34" viewBox="0 0 34 34"><rect x="0.7" y="0.7" width="21" height="30.8" rx="4" fill="none" stroke="#d4d4d4" stroke-width="1.2"/><circle cx="4.9" cy="5.3" r="0.9" fill="#d4d4d4"/><circle cx="16.9" cy="5.3" r="0.9" fill="#d4d4d4"/><circle cx="4.9" cy="27" r="1.9" fill="#d4d4d4"/><circle cx="16.9" cy="27" r="1.9" fill="#d4d4d4"/></svg><svg class="r" style="left:442px;top:71px;" width="34" height="34" viewBox="0 0 34 34"><path d="M6.4 0.4V32M0 25.6H31.6" fill="none" stroke="#d0d0d0" stroke-width="1.1" /></svg><svg class="r" style="left:478px;top:71px;" width="34" height="34" viewBox="0 0 34 34"><path d="M7.3 5V30.7M15.4 5V30.7M23.4 5V30.7M0 31.4H31.4M2.9 26.3L7.3 30.7L11.4 26.7L15.4 30.7L19.5 26.7L23.4 30.7L27.5 26.3" fill="none" stroke="#1a1a1a" stroke-width="1.2" /></svg><svg class="r" style="left:525.5px;top:71.5px;" width="34" height="34" viewBox="0 0 34 34"><path d="M16.9 6.1H0.6V31.7H27.3V16.3" fill="none" stroke="#1a1a1a" stroke-width="1.25" /><path d="M0.6 31.7L13 22.2L18.1 26.5L23.9 19.3L27.3 22.4" fill="none" stroke="#1a1a1a" stroke-width="1.2" /><circle cx="13.3" cy="13.9" r="1.6" fill="#111"/><path d="M26.8 1V11.2M21.7 6.1H31.9" fill="none" stroke="#f26c21" stroke-width="1.1" /></svg><svg class="r" style="left:565px;top:71.5px;" width="34" height="34" viewBox="0 0 34 34"><path d="M0.6 6.1H27.2V31.7H0.6Z" fill="none" stroke="#1a1a1a" stroke-width="1.25" /><path d="M0.6 31.7L13 22.2L18.1 26.5L23.9 19.3L27.3 22.4" fill="none" stroke="#1a1a1a" stroke-width="1.2" /><circle cx="12.4" cy="13.9" r="1.6" fill="#111"/><path d="M4.2 1H31.9V27.3" fill="none" stroke="#1a1a1a" stroke-width="1.1" /></svg><svg class="r" style="left:620px;top:71px;" width="34" height="34" viewBox="0 0 34 34"><path d="M31.27 13.02 L31.27 18.38 L27.57 18.50 L26.13 21.97 L28.66 24.67 L24.87 28.46 L22.17 25.93 L18.70 27.37 L18.58 31.07 L13.22 31.07 L13.10 27.37 L9.63 25.93 L6.93 28.46 L3.14 24.67 L5.67 21.97 L4.23 18.50 L0.53 18.38 L0.53 13.02 L4.23 12.90 L5.67 9.43 L3.14 6.73 L6.93 2.94 L9.63 5.47 L13.10 4.03 L13.22 0.33 L18.58 0.33 L18.70 4.03 L22.17 5.47 L24.87 2.94 L28.66 6.73 L26.13 9.43 L27.57 12.90Z" fill="none" stroke="#1a1a1a" stroke-width="1.2" stroke-linejoin="round" transform="rotate(22.5 15.9 15.7)"/><path d="M11.8 11.7L7.6 15.9L11.8 20.1M20 11.7L24.2 15.9L20 20.1M17.9 9.5L13.9 22.5" fill="none" stroke="#1a1a1a" stroke-width="1.2" /></svg><svg class="r" style="left:669px;top:72px;" width="34" height="34" viewBox="0 0 34 34"><rect x="0.6" y="0.6" width="31" height="30.6" fill="none" stroke="#1a1a1a" stroke-width="1.2"/><path d="M8.2 4V13M3.7 8.5H12.7M19.5 8.5H28.5M5 20.4L11.4 26.8M11.4 20.4L5 26.8M19.5 23.6H28.5" fill="none" stroke="#f26c21" stroke-width="1.1" /><circle cx="24" cy="19.8" r="0.9" fill="#f26c21"/><circle cx="24" cy="27.4" r="0.9" fill="#f26c21"/></svg><svg class="r" style="left:734px;top:71px;" width="34" height="34" viewBox="0 0 34 34"><path d="M30.37 10.53A15.4 15.4 0 1 1 23.13 2.20" fill="none" stroke="#1a1a1a" stroke-width="1.2" /><path d="M27.16 14.82A11.3 11.3 0 1 1 18.82 4.89" fill="none" stroke="#1a1a1a" stroke-width="1.2" /><path d="M8.3 14.9L11.4 11.9L15 15.6L28.2 2.6L31.4 5.8L15 21.6Z" fill="#fff" stroke="#f26c21" stroke-width="1.1"/></svg><svg class="r" style="left:786.5px;top:71px;" width="34" height="34" viewBox="0 0 34 34"><path d="M15.9 0.4V31.4M0.5 26.3H15.9" fill="none" stroke="#1a1a1a" stroke-width="1.3" /><path d="M15.9 0.6H32.2A16.3 16.3 0 0 1 15.9 16.8" fill="none" stroke="#f26c21" stroke-width="1.1" /></svg><svg class="r" style="left:842px;top:71px;" width="34" height="34" viewBox="0 0 34 34"><path d="M0.8 19.6H25.5A5.1 5.1 0 0 0 25.5 9.4H24.2" fill="none" stroke="#333" stroke-width="1.4" /></svg><svg class="r" style="left:903.5px;top:71px;" width="34" height="34" viewBox="0 0 34 34"><path d="M13.1 0.4H25.1L1.2 31.4H13.1" fill="none" stroke="#f9c3a3" stroke-width="1.0" /><path d="M13.1 0.4V31.4" fill="none" stroke="#c9c9c9" stroke-width="1.1" /></svg><svg class="r" style="left:946px;top:71px;" width="34" height="34" viewBox="0 0 34 34"><path d="M0 31.4H32" fill="none" stroke="#c9c9c9" stroke-width="1.1" /><path d="M11.2 16.5q-1.8 2.2 0 4.6q1.8 2.4 0 4.8q-1.8 2.2 -0.6 4.5M21.4 16.5q-1.8 2.2 0 4.6q1.8 2.4 0 4.8q-1.8 2.2 -0.6 4.5" fill="none" stroke="#f9c3a3" stroke-width="1.0" /></svg><svg class="r" style="left:992px;top:71px;" width="36" height="34" viewBox="0 0 36 34"><path d="M4 17.9Q17 25.5 29.9 17.9" fill="none" stroke="#f9c3a3" stroke-width="1.0" /><circle cx="4" cy="17.6" r="1.6" fill="#f9c3a3"/><circle cx="29.9" cy="17.6" r="1.6" fill="#f9c3a3"/><path d="M4 20.8L1.7 26.3H6.3ZM29.9 20.8L27.6 26.3H32.2Z" fill="none" stroke="#c9c9c9" stroke-width="1.0" /></svg><svg class="r" style="left:1046px;top:71px;" width="36" height="34" viewBox="0 0 36 34"><circle cx="4.1" cy="15.8" r="3.2" fill="#111"/><circle cx="16.9" cy="15.8" r="3.2" fill="#111"/><circle cx="30.1" cy="15.8" r="3.2" fill="#111"/></svg><svg class="r" style="left:1103px;top:71px;" width="34" height="34" viewBox="0 0 34 34"><path d="M0.5 31.4H32M0.5 31.4L11.1 17.9L32 15.4" fill="none" stroke="#1a1a1a" stroke-width="1.3" /><path d="M0.5 0.4V31.4" fill="none" stroke="#f26c21" stroke-width="1.1" /><path d="M21.3 10.6L28.3 1.4" fill="none" stroke="#f26c21" stroke-width="1.1" /><circle cx="21.6" cy="3.6" r="2.2" fill="none" stroke="#f26c21" stroke-width="1.1"/><circle cx="28.1" cy="8.6" r="2.2" fill="none" stroke="#f26c21" stroke-width="1.1"/></svg><svg class="r" style="left:1141px;top:71px;" width="34" height="34" viewBox="0 0 34 34"><path d="M0.4 31.4H32M0.4 31.4L11.5 15.4H32" fill="none" stroke="#1a1a1a" stroke-width="1.3" /><path d="M0.4 0.4V31.4" fill="none" stroke="#f26c21" stroke-width="1.1" /></svg><svg class="r" style="left:1177px;top:71px;" width="34" height="34" viewBox="0 0 34 34"><path d="M0.4 31.4H31.7" fill="none" stroke="#f26c21" stroke-width="1.1" /><path d="M0.4 0.4V31.4L10.8 15.4H31.7" fill="none" stroke="#1a1a1a" stroke-width="1.3" /></svg><svg class="r" style="left:1213px;top:71px;" width="34" height="34" viewBox="0 0 34 34"><path d="M0.6 31.4H31.7" fill="none" stroke="#f26c21" stroke-width="1.1" /><path d="M0.6 0.4V31.4L11.3 17.9L31.7 15.4" fill="none" stroke="#1a1a1a" stroke-width="1.3" /><path d="M26.2 0.8V8" fill="none" stroke="#f26c21" stroke-width="1.2" /><circle cx="26.2" cy="10.4" r="0.8" fill="#f26c21"/></svg><svg class="r" style="left:1250px;top:71px;" width="34" height="34" viewBox="0 0 34 34"><path d="M0.6 1.2V32H32" fill="none" stroke="#1a1a1a" stroke-width="1.3" /><path d="M0.6 32C2 17 5 11.3 12.3 10.6L32 8.9" fill="none" stroke="#1a1a1a" stroke-width="1.3" /><path d="M6.5 15.2L21.5 13.7" fill="none" stroke="#1a1a1a" stroke-width="1.1" stroke-dasharray="1.3 1.7"/></svg><svg class="r" style="left:1299px;top:71px;" width="34" height="34" viewBox="0 0 34 34"><path d="M0.8 31.4L31.9 0.8M24.3 0.8H31.9V8.4M0.8 23.8V31.4H8.4" fill="none" stroke="#1a1a1a" stroke-width="1.3" /><path d="M6.3 6.2L25.7 25.6M6.3 12.7V6.2H12.8M25.7 19.1V25.6H19.2" fill="none" stroke="#f26c21" stroke-width="1.1" /></svg><div class="t" style="left:74.95px;top:108.00px;font-size:12px;color:#111;letter-spacing:-0.169px;">New</div><div class="t" style="left:111.15px;top:108.00px;font-size:12px;color:#111;letter-spacing:-0.078px;">Copy</div><div class="t" style="left:159.05px;top:108.00px;font-size:12px;color:#111;letter-spacing:-0.047px;">Undo</div><div class="t" style="left:197.75px;top:108.00px;font-size:12px;color:#cdcdcd;letter-spacing:-0.547px;">Redo</div><div class="t" style="left:237.45px;top:108.00px;font-size:12px;color:#111;letter-spacing:-0.713px;">Save</div><div class="t" style="left:281.75px;top:106.00px;font-size:12px;color:#111;letter-spacing:0.082px;">Member</div><div class="t" style="left:286.75px;top:121.00px;font-size:12px;color:#111;letter-spacing:-0.304px;">names</div><div class="t" style="left:331.00px;top:106.00px;font-size:12px;color:#cdcdcd;letter-spacing:-0.077px;">Dimension</div><div class="t" style="left:347.50px;top:121.00px;font-size:12px;color:#cdcdcd;letter-spacing:-0.136px;">lines</div><div class="t" style="left:403.25px;top:106.00px;font-size:12px;color:#cdcdcd;letter-spacing:-0.697px;">Rebars</div><div class="t" style="left:447.30px;top:106.00px;font-size:12px;color:#cdcdcd;letter-spacing:-0.418px;">Grid</div><div class="t" style="left:479.25px;top:106.00px;font-size:12px;color:#111;letter-spacing:-0.439px;">Loads</div><div class="t" style="left:529.85px;top:108.00px;font-size:12px;color:#111;letter-spacing:-0.169px;">New</div><div class="t" style="left:563.05px;top:108.00px;font-size:12px;color:#111;letter-spacing:-0.359px;">Gallery</div><div class="t" style="left:613.70px;top:108.00px;font-size:12px;color:#111;letter-spacing:-0.170px;">Settings</div><div class="t" style="left:660.45px;top:108.00px;font-size:12px;color:#111;letter-spacing:-0.170px;">Calculate</div><div class="t" style="left:724.95px;top:106.00px;font-size:12px;color:#111;letter-spacing:-0.120px;">Summary</div><div class="t" style="left:780.25px;top:106.00px;font-size:12px;color:#111;letter-spacing:-0.108px;">Strength</div><div class="t" style="left:829.00px;top:106.00px;font-size:12px;color:#111;letter-spacing:-0.005px;">Anchorage</div><div class="t" style="left:901.50px;top:106.00px;font-size:12px;color:#cdcdcd;letter-spacing:-0.668px;">Stress</div><div class="t" style="left:891.30px;top:121.00px;font-size:12px;color:#cdcdcd;letter-spacing:0.265px;">limitation</div><div class="t" style="left:947.25px;top:106.00px;font-size:12px;color:#cdcdcd;letter-spacing:-0.367px;">Crack</div><div class="t" style="left:947.05px;top:121.00px;font-size:12px;color:#cdcdcd;letter-spacing:0.297px;">width</div><div class="t" style="left:982.10px;top:106.00px;font-size:12px;color:#cdcdcd;letter-spacing:-0.036px;">Deflection</div><div class="t" style="left:1040.00px;top:106.00px;font-size:12px;color:#111;letter-spacing:-0.038px;">Auxiliary</div><div class="t" style="left:1100.40px;top:106.00px;font-size:12px;color:#111;letter-spacing:-0.108px;">σc,eq /</div><div class="t" style="left:1102.40px;top:121.00px;font-size:12px;color:#111;letter-spacing:-0.011px;">σc,lim</div><div class="t" style="left:1143.30px;top:106.00px;font-size:12px;color:#111;letter-spacing:-0.418px;">σc,eq</div><div class="t" style="left:1184.80px;top:106.00px;font-size:12px;color:#111;letter-spacing:-0.341px;">εc3</div><div class="t" style="left:1221.80px;top:106.00px;font-size:12px;color:#111;letter-spacing:0.103px;">εpl</div><div class="t" style="left:1251.75px;top:106.00px;font-size:12px;color:#606060;letter-spacing:-0.097px;">σc,3 /</div><div class="t" style="left:1250.50px;top:118.00px;font-size:12px;color:#606060;letter-spacing:-0.011px;">σc,lim</div><div class="t" style="left:1288.45px;top:106.00px;font-size:12px;color:#111;letter-spacing:-0.085px;">Directions</div><div class="t" style="left:37.00px;top:144.00px;font-size:12px;color:#f8b48e;font-weight:bold;letter-spacing:-0.105px;">Project items</div><div class="t" style="left:200.50px;top:144.00px;font-size:12px;color:#a0a0a0;letter-spacing:-0.587px;">Data</div><div class="t" style="left:318.25px;top:144.00px;font-size:12px;color:#a0a0a0;letter-spacing:-0.477px;">Labels</div><div class="t" style="left:443.35px;top:144.00px;font-size:12px;color:#a0a0a0;letter-spacing:-0.376px;">Draw</div><div class="t" style="left:541.25px;top:144.00px;font-size:12px;color:#a0a0a0;letter-spacing:-0.231px;">Pictures</div><div class="t" style="left:633.50px;top:144.00px;font-size:12px;color:#a0a0a0;letter-spacing:-0.033px;">Calculation</div><div class="t" style="left:855.35px;top:144.00px;font-size:12px;color:#a0a0a0;letter-spacing:-0.123px;">Code-check results</div><div class="t" style="left:1256.45px;top:144.00px;font-size:12px;color:#a0a0a0;letter-spacing:-0.502px;">Results</div><div class="r" style="left:1344px;top:70px;width:98px;height:20px;background:#e1e1e1;"></div><div class="t" style="left:1349.30px;top:75.00px;font-size:12px;color:#111;letter-spacing:-0.234px;">Label extreme</div><div class="r" style="left:1344px;top:92px;width:98px;height:20px;background:#e1e1e1;"></div><div class="t" style="left:1349.30px;top:97.00px;font-size:12px;color:#111;letter-spacing:-0.242px;">Draw mesh</div><div class="t" style="left:1348.00px;top:117.00px;font-size:12px;color:#333;letter-spacing:-0.504px;">Scale</div><div class="r" style="left:1392px;top:113.5px;width:59.5px;height:25px;background:#e6e6e6;border:1px solid #b5b5b5;box-sizing:border-box;"></div><div class="t" style="left:1406.50px;top:121.00px;font-size:12.5px;color:#a3a3a3;letter-spacing:-0.582px;">1,00</div><svg class="r" style="left:1439px;top:117px;" width="8" height="18" viewBox="0 0 8 18"><path d="M0.7 5.2L3.7 1.2L6.7 5.2Z M0.7 12.6L3.7 16.6L6.7 12.6Z" fill="#a8a8a8"/></svg><div class="r" style="left:0px;top:0px;width:1918px;height:58px;background:repeating-linear-gradient(180deg, rgba(0,0,0,0.38) 0px, rgba(0,0,0,0.38) 1px, rgba(0,0,0,0) 1px, rgba(0,0,0,0) 7px),repeating-linear-gradient(180deg, rgba(255,255,255,0.07) 0px, rgba(255,255,255,0.07) 1px, rgba(255,255,255,0) 1px, rgba(255,255,255,0) 5px),repeating-linear-gradient(180deg, rgba(0,0,0,0.28) 0px, rgba(0,0,0,0.28) 2px, rgba(0,0,0,0) 2px, rgba(0,0,0,0) 11px),linear-gradient(90deg,#040404 0%,#0e0e0e 12%,#212121 28%,#2f2f2f 48%,#2b2b2b 62%,#1a1a1a 80%,#090909 100%);"></div><div class="r" style="left:0px;top:58px;width:1918px;height:5px;background:#f26c21;"></div><svg class="r" style="left:11.2px;top:6.2px;" width="80" height="22" viewBox="0 0 80 22"><g transform="skewX(-14)" fill="none" stroke="#f26c21" stroke-width="2.1"><rect x="7.6" y="1.5" width="62.4" height="17" rx="1"/></g><g transform="skewX(-14)" fill="#f26c21"><rect x="10.6" y="3.9" width="3.6" height="12.2"/><path d="M16.6 3.9h12.8v12.2h-12.8zM20.2 6.9v6.2h5.6v-6.2z" fill-rule="evenodd"/><path d="M31.8 3.9h15v3h-11.4v1.6h11.4v3h-11.4v1.6h11.4v3h-15z"/><path d="M49.2 3.9h17.8v12.2h-17.8v-7.6h14.2v-1.6h-14.2zM52.8 11.4v1.8h10.6v-1.8z" fill-rule="evenodd"/></g></svg><div class="t" style="left:84.50px;top:6.00px;font-size:20px;color:#fff;font-weight:bold;font-style:italic;letter-spacing:0.013px;">StatiCa</div><div class="t" style="left:155.50px;top:8.00px;font-size:7px;color:#ddd;">®</div><div class="t" style="left:180.00px;top:9.00px;font-size:15.5px;color:#fff;font-style:italic;letter-spacing:0.147px;font-weight:bold;">DETAIL</div><div class="t" style="left:12.00px;top:37.00px;font-size:9px;color:#fff;font-weight:bold;font-style:italic;letter-spacing:0.041px;">Calculate yesterday's estimates</div><div class="t" style="left:827.50px;top:9.00px;font-size:14px;color:#fff;letter-spacing:-0.266px;">Tutorial_3D_Footing_24.1.ideaDet</div><div class="r" style="left:214px;top:33px;width:100px;height:25px;background:#9b9b9b;border-radius:6px 6px 0 0;"></div><div class="t" style="left:244.50px;top:39.00px;font-size:13px;color:#fff;font-weight:bold;letter-spacing:-0.725px;">Project</div><div class="r" style="left:317.5px;top:33px;width:100px;height:25px;background:#9b9b9b;border-radius:6px 6px 0 0;"></div><div class="t" style="left:349.00px;top:38.00px;font-size:13px;color:#fff;font-weight:bold;letter-spacing:-1.057px;">Design</div><div class="r" style="left:421px;top:33px;width:100px;height:25px;background:#f26c21;border-radius:6px 6px 0 0;"></div><div class="t" style="left:454.10px;top:38.00px;font-size:13px;color:#fff;font-weight:bold;letter-spacing:-1.044px;">Check</div><div class="r" style="left:524px;top:33px;width:100px;height:25px;background:#9b9b9b;border-radius:6px 6px 0 0;"></div><div class="t" style="left:554.70px;top:38.00px;font-size:13px;color:#fff;font-weight:bold;letter-spacing:-0.548px;">Report</div><div class="r" style="left:627.5px;top:33px;width:100px;height:25px;background:#9b9b9b;border-radius:6px 6px 0 0;"></div><div class="t" style="left:652.15px;top:38.00px;font-size:13px;color:#fff;font-weight:bold;letter-spacing:-0.629px;">Materials</div><div class="r" style="left:1649px;top:34px;width:179px;height:18px;background:#fff;"></div><div class="t" style="left:1653.00px;top:38.00px;font-size:12px;color:#9a9a9a;letter-spacing:-0.136px;">Search on ideastatica.com</div><svg class="r" style="left:1810px;top:36px;" width="14" height="14" viewBox="0 0 14 14"><circle cx="5.3" cy="5.3" r="4" fill="none" stroke="#c8c8c8" stroke-width="1.2"/><path d="M8.3 8.3L12.3 12.3" stroke="#c8c8c8" stroke-width="1.4"/></svg><div class="r" style="left:1840px;top:8px;width:17px;height:17px;background:#ececec;border-radius:2.5px;"></div><div class="r" style="left:1844px;top:20px;width:9px;height:2px;background:#111;"></div><div class="r" style="left:1867px;top:8px;width:17px;height:17px;background:#ececec;border-radius:2.5px;"></div><div class="r" style="left:1871px;top:12px;width:9px;height:9px;border:1px solid #111;border-top-width:2px;box-sizing:border-box;"></div><div class="r" style="left:1894px;top:8px;width:17px;height:17px;background:#df6a20;border-radius:2.5px;"></div><svg class="r" style="left:1894px;top:8px;" width="17" height="17" viewBox="0 0 17 17"><path d="M4.5 4.5L12.5 12.5M12.5 4.5L4.5 12.5" stroke="#111" stroke-width="2.2"/></svg><div class="r" style="left:1894px;top:33px;width:17px;height:17px;background:#df6a20;border-radius:2.5px;"></div><div class="r" style="left:1901.3px;top:36.5px;width:2.4px;height:2.4px;background:#111;"></div><div class="r" style="left:1901.3px;top:40.3px;width:2.4px;height:6.4px;background:#111;"></div><div class="r" style="left:0px;top:1000px;width:1918px;height:31px;background:repeating-linear-gradient(180deg, rgba(0,0,0,0.35) 0px, rgba(0,0,0,0.35) 1px, rgba(0,0,0,0) 1px, rgba(0,0,0,0) 7px),repeating-linear-gradient(180deg, rgba(255,255,255,0.06) 0px, rgba(255,255,255,0.06) 1px, rgba(255,255,255,0) 1px, rgba(255,255,255,0) 5px),repeating-linear-gradient(180deg, rgba(0,0,0,0.25) 0px, rgba(0,0,0,0.25) 2px, rgba(0,0,0,0) 2px, rgba(0,0,0,0) 11px),linear-gradient(90deg,#050505 0%,#101010 10%,#1f1f1f 24%,#2c2c2c 45%,#2c2c2c 66%,#1c1c1c 82%,#0a0a0a 100%);"></div><div class="t" style="left:17.50px;top:1012.00px;font-size:12px;color:#8a8a8a;font-weight:bold;letter-spacing:-0.528px;">Design Code:</div><div class="t" style="left:92.00px;top:1012.00px;font-size:12px;color:#fff;font-weight:bold;letter-spacing:-0.835px;">EN</div><div class="t" style="left:137.00px;top:1012.00px;font-size:12px;color:#8a8a8a;font-weight:bold;letter-spacing:-0.553px;">Rounding:</div><div class="t" style="left:195.50px;top:1012.00px;font-size:12px;color:#fff;font-weight:bold;letter-spacing:0.276px;">Metric</div><div class="t" style="left:263.00px;top:1012.00px;font-size:12px;color:#8a8a8a;font-weight:bold;letter-spacing:-0.264px;">Presentation Units:</div><div class="t" style="left:371.50px;top:1012.00px;font-size:12px;color:#fff;font-weight:bold;letter-spacing:0.276px;">Metric</div><div class="t" style="left:1793.00px;top:1012.00px;font-size:12.5px;color:#f26c21;letter-spacing:-0.466px;">www.</div><div class="t" style="left:1822.50px;top:1012.00px;font-size:12.5px;color:#fff;letter-spacing:-0.342px;">ideastatica</div><div class="t" style="left:1882.00px;top:1012.00px;font-size:12.5px;color:#f26c21;letter-spacing:-0.147px;">.com</div><div class="r" style="left:867px;top:336px;width:328px;height:515.5px;background:#fff;border:1px solid #838383;box-sizing:border-box;"></div><div class="r" style="left:868px;top:337px;width:326px;height:30px;background:#a6a6a6;"></div><div class="t" style="left:876.30px;top:345.00px;font-size:15.5px;color:#fff;letter-spacing:-0.218px;">Section properties</div><svg class="r" style="left:1164px;top:345px;" width="14" height="14" viewBox="0 0 14 14"><path d="M2 2L12.4 12.4M12.4 2L2 12.4" stroke="#fff" stroke-width="1.1"/></svg><div class="t" style="left:900.30px;top:381.00px;font-size:12px;color:#111;letter-spacing:-0.127px;">Name</div><div class="r" style="left:949px;top:377px;width:235px;height:20px;background:#fff;border:1px solid #abadb3;box-sizing:border-box;"></div><div class="t" style="left:952.40px;top:381.00px;font-size:12px;color:#111;letter-spacing:-0.337px;">Section1</div><svg class="r" style="left:883px;top:423.5px;" width="11" height="8" viewBox="0 0 11 8"><path d="M1.3 1.5L5.3 5.5L9.3 1.5" fill="none" stroke="#f26c21" stroke-width="1.1"/></svg><div class="t" style="left:900.30px;top:421.00px;font-size:12px;color:#000;font-weight:bold;letter-spacing:-0.177px;">Plane definition</div><div class="t" style="left:900.30px;top:446.00px;font-size:12px;color:#111;letter-spacing:0.027px;">Plane definition</div><div class="r" style="left:1055.5px;top:441.3px;width:19.3px;height:19.4px;background:#d4d4d4;"></div><svg class="r" style="left:996px;top:442.0px;" width="18" height="18" viewBox="0 0 18 18"><path d="M1.5 6.5L5.8 1.5H16.5V11.2L11.5 16.5H1.5Z" fill="#fff"/><g transform="translate(0,0.5)"><path d="M4.4 5.3L7 2.2H14.2L11.4 5.3Z" fill="#f26c21"/></g><path d="M1.5 6.5H11.5V16.5H1.5ZM1.5 6.5L5.8 1.5H16.5L11.5 6.5M16.5 1.5V11.2L11.5 16.5" fill="none" stroke="#111" stroke-width="1" stroke-linejoin="round"/></svg><svg class="r" style="left:1016px;top:442.0px;" width="18" height="18" viewBox="0 0 18 18"><path d="M1.5 6.5L5.8 1.5H16.5V11.2L11.5 16.5H1.5Z" fill="#fff"/><g transform="translate(0,0.5)"><path d="M2.5 7.2H10.6V15H2.5Z" fill="#f26c21"/></g><path d="M1.5 6.5H11.5V16.5H1.5ZM1.5 6.5L5.8 1.5H16.5L11.5 6.5M16.5 1.5V11.2L11.5 16.5" fill="none" stroke="#111" stroke-width="1" stroke-linejoin="round"/></svg><svg class="r" style="left:1036px;top:442.0px;" width="18" height="18" viewBox="0 0 18 18"><path d="M1.5 6.5L5.8 1.5H16.5V11.2L11.5 16.5H1.5Z" fill="#fff"/><g transform="translate(0,0.5)"><path d="M12.8 7L15.6 3.8V10.2L12.8 13.6Z" fill="#f26c21"/></g><path d="M1.5 6.5H11.5V16.5H1.5ZM1.5 6.5L5.8 1.5H16.5L11.5 6.5M16.5 1.5V11.2L11.5 16.5" fill="none" stroke="#111" stroke-width="1" stroke-linejoin="round"/></svg><svg class="r" style="left:1056px;top:442.0px;" width="18" height="18" viewBox="0 0 18 18"><path d="M1.5 6.5L5.8 1.5H16.5V11.2L11.5 16.5H1.5Z" fill="#d4d4d4"/><g transform="translate(0,0.5)"><path d="M4.9 6L14.7 3.4L11.5 11.7Z" fill="#f26c21"/></g><path d="M1.5 6.5H11.5V16.5H1.5ZM1.5 6.5L5.8 1.5H16.5L11.5 6.5M16.5 1.5V11.2L11.5 16.5" fill="none" stroke="#111" stroke-width="1" stroke-linejoin="round"/></svg><div class="t" style="left:900.30px;top:470.00px;font-size:12px;color:#111;letter-spacing:0.100px;">X [m]</div><div class="r" style="left:995px;top:465px;width:189px;height:20px;background:#fff;border:1px solid #d9d9d9;box-sizing:border-box;"></div><div class="t" style="left:1000.60px;top:470.00px;font-size:12px;color:#111;letter-spacing:-0.464px;">1,00</div><div class="t" style="left:900.30px;top:494.00px;font-size:12px;color:#111;letter-spacing:0.143px;">Y [m]</div><div class="r" style="left:995px;top:489px;width:189px;height:20px;background:#fff;border:1px solid #d9d9d9;box-sizing:border-box;"></div><div class="t" style="left:1000.60px;top:494.00px;font-size:12px;color:#111;letter-spacing:-0.170px;">-1,00</div><div class="t" style="left:900.30px;top:518.00px;font-size:12px;color:#111;letter-spacing:0.234px;">Z [m]</div><div class="r" style="left:995px;top:513px;width:189px;height:20px;background:#fff;border:1px solid #d9d9d9;box-sizing:border-box;"></div><div class="t" style="left:1000.60px;top:518.00px;font-size:12px;color:#111;letter-spacing:-0.339px;">0,00</div><svg class="r" style="left:883px;top:555.5px;" width="11" height="8" viewBox="0 0 11 8"><path d="M1.3 1.5L5.3 5.5L9.3 1.5" fill="none" stroke="#f26c21" stroke-width="1.1"/></svg><div class="t" style="left:900.30px;top:553.00px;font-size:12px;color:#000;font-weight:bold;letter-spacing:-0.479px;">Position</div><div class="t" style="left:900.30px;top:578.00px;font-size:12px;color:#111;letter-spacing:-0.029px;">Master</div><div class="r" style="left:995px;top:573px;width:189px;height:20px;background:#fff;border:1px solid #d9d9d9;box-sizing:border-box;"></div><div class="t" style="left:1000.60px;top:578.00px;font-size:12px;color:#111;letter-spacing:-1.227px;">SB1</div><svg class="r" style="left:1168px;top:579px;" width="12" height="9" viewBox="0 0 12 9"><path d="M1.6 2L6 6.3L10.4 2" fill="none" stroke="#222" stroke-width="1.2"/></svg><div class="t" style="left:900.30px;top:602.00px;font-size:12px;color:#111;letter-spacing:-0.265px;">Surface</div><div class="r" style="left:995px;top:597px;width:189px;height:20px;background:#fff;border:1px solid #d9d9d9;box-sizing:border-box;"></div><div class="t" style="left:1000.60px;top:602.00px;font-size:12px;color:#111;">1</div><svg class="r" style="left:1168px;top:603px;" width="12" height="9" viewBox="0 0 12 9"><path d="M1.6 2L6 6.3L10.4 2" fill="none" stroke="#222" stroke-width="1.2"/></svg><div class="t" style="left:900.30px;top:626.00px;font-size:12px;color:#111;letter-spacing:-0.381px;">Edge</div><div class="r" style="left:995px;top:621px;width:189px;height:20px;background:#fff;border:1px solid #d9d9d9;box-sizing:border-box;"></div><div class="t" style="left:1000.60px;top:626.00px;font-size:12px;color:#111;">1</div><svg class="r" style="left:1168px;top:627px;" width="12" height="9" viewBox="0 0 12 9"><path d="M1.6 2L6 6.3L10.4 2" fill="none" stroke="#222" stroke-width="1.2"/></svg><div class="t" style="left:900.30px;top:650.00px;font-size:12px;color:#111;letter-spacing:0.100px;">X [m]</div><div class="r" style="left:995px;top:645px;width:189px;height:20px;background:#fff;border:1px solid #d9d9d9;box-sizing:border-box;"></div><div class="t" style="left:1000.60px;top:650.00px;font-size:12px;color:#111;letter-spacing:-0.339px;">0,00</div><div class="t" style="left:900.30px;top:674.00px;font-size:12px;color:#111;letter-spacing:0.143px;">Y [m]</div><div class="r" style="left:995px;top:669px;width:189px;height:20px;background:#fff;border:1px solid #d9d9d9;box-sizing:border-box;"></div><div class="t" style="left:1000.60px;top:674.00px;font-size:12px;color:#111;letter-spacing:-0.339px;">0,00</div><div class="t" style="left:900.30px;top:698.00px;font-size:12px;color:#111;letter-spacing:0.234px;">Z [m]</div><div class="r" style="left:995px;top:693px;width:189px;height:20px;background:#fff;border:1px solid #d9d9d9;box-sizing:border-box;"></div><div class="t" style="left:1000.60px;top:698.00px;font-size:12px;color:#111;letter-spacing:-0.339px;">0,00</div><svg class="r" style="left:883px;top:735.8px;" width="11" height="8" viewBox="0 0 11 8"><path d="M1.3 1.5L5.3 5.5L9.3 1.5" fill="none" stroke="#f26c21" stroke-width="1.1"/></svg><div class="t" style="left:900.30px;top:733.00px;font-size:12px;color:#000;font-weight:bold;letter-spacing:-0.028px;">Report</div><div class="t" style="left:900.30px;top:758.00px;font-size:12px;color:#111;letter-spacing:0.031px;">Print in report</div><div class="r" style="left:995px;top:757.3px;width:12px;height:12px;background:#fff;border:1px solid #333;box-sizing:border-box;"></div><svg class="r" style="left:995px;top:757.3px;" width="12" height="12" viewBox="0 0 12 12"><path d="M2.8 6.2L5 8.4L9.4 3.6" fill="none" stroke="#f26c21" stroke-width="1.1"/></svg><div class="r" style="left:868px;top:799.5px;width:326px;height:51px;background:#e6e6e6;"></div><div class="r" style="left:880px;top:811px;width:98px;height:28px;background:#ee854a;"></div><div class="t" style="left:911.00px;top:819.00px;font-size:14px;color:#fff;letter-spacing:0.196px;">Apply</div><div class="r" style="left:982px;top:811px;width:98px;height:28px;background:#ee854a;"></div><div class="t" style="left:1020.95px;top:819.00px;font-size:14px;color:#fff;letter-spacing:-0.364px;">OK</div><div class="r" style="left:1085px;top:811px;width:97px;height:28px;background:#b2b2b2;"></div><div class="t" style="left:1112.25px;top:819.00px;font-size:14px;color:#fff;letter-spacing:-0.347px;">Cancel</div><div class="r" style="left:999.3px;top:153.5px;width:44.700000000000045px;height:36.0px;border:3.9px solid #ff0000;border-radius:9px;box-sizing:border-box;"></div><div class="r" style="left:1000px;top:198.2px;width:87px;height:28.30000000000001px;border:3.9px solid #ff0000;border-radius:8px;box-sizing:border-box;"></div><div class="r" style="left:1050.6px;top:430.8px;width:30.0px;height:38.69999999999999px;border:3.9px solid #ff0000;border-radius:7px;box-sizing:border-box;"></div><div class="r" style="left:989.8px;top:486.2px;width:62.600000000000136px;height:24.0px;border:3.9px solid #ff0000;border-radius:7px;box-sizing:border-box;"></div><div class="r" style="left:984.3px;top:750px;width:34.700000000000045px;height:25.600000000000023px;border:3.9px solid #ff0000;border-radius:6.5px;box-sizing:border-box;"></div><div class="r" style="left:978px;top:796px;width:108.5px;height:54.799999999999955px;border:3.9px solid #ff0000;border-radius:8px;box-sizing:border-box;"></div><div class="t" style="left:978.60px;top:160.00px;font-size:26.5px;color:#ff0000;transform:scaleX(0.94);transform-origin:0 0;-webkit-text-stroke:0.45px #ff0000;">1</div><div class="t" style="left:1036.20px;top:236.00px;font-size:26.5px;color:#ff0000;transform:scaleX(0.94);transform-origin:0 0;-webkit-text-stroke:0.45px #ff0000;">2</div><div class="t" style="left:1085.20px;top:417.00px;font-size:26.5px;color:#ff0000;transform:scaleX(0.94);transform-origin:0 0;-webkit-text-stroke:0.45px #ff0000;">3</div><div class="t" style="left:968.00px;top:485.00px;font-size:26.5px;color:#ff0000;transform:scaleX(0.94);transform-origin:0 0;-webkit-text-stroke:0.45px #ff0000;">4</div><div class="t" style="left:993.40px;top:719.00px;font-size:26.5px;color:#ff0000;transform:scaleX(0.94);transform-origin:0 0;-webkit-text-stroke:0.45px #ff0000;">5</div><div class="t" style="left:1060.00px;top:764.00px;font-size:26.5px;color:#ff0000;transform:scaleX(0.94);transform-origin:0 0;-webkit-text-stroke:0.45px #ff0000;">6</div></body></html>
